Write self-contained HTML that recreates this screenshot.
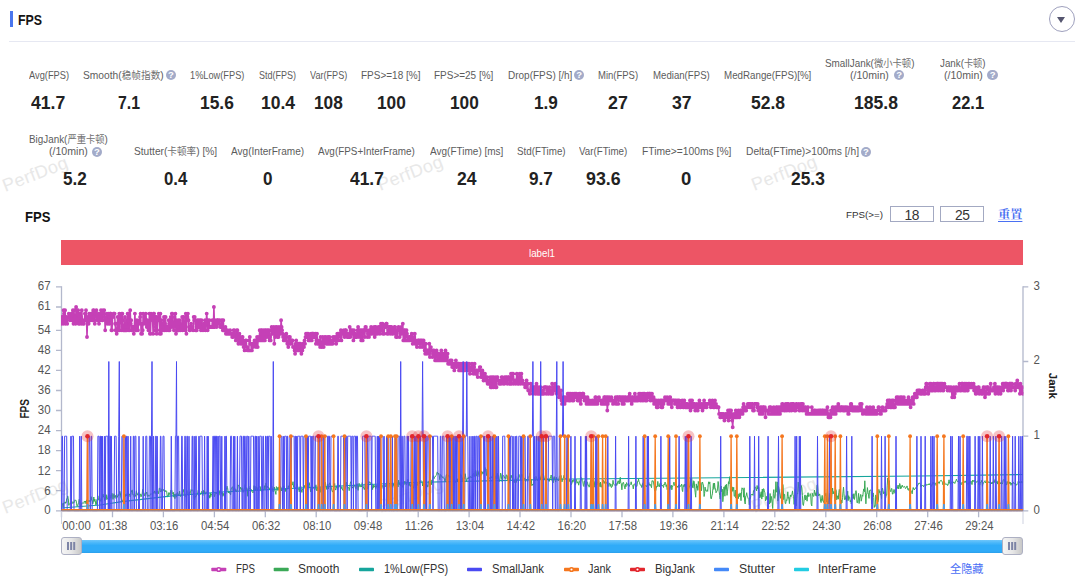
<!DOCTYPE html>
<html lang="zh-CN"><head><meta charset="utf-8"><title>FPS</title>
<style>
html,body{margin:0;padding:0;background:#fff}
body{width:1080px;height:579px;position:relative;overflow:hidden;font-family:"Liberation Sans","Noto Sans CJK SC",sans-serif;color:#222}
.hd{position:absolute;left:9px;top:0;width:1066px;height:41px;border-bottom:1px solid #e6e8f2}
.hd .bar{position:absolute;left:0.5px;top:11.2px;width:3px;height:15.8px;background:#4a76ee}
.tg{position:absolute;left:1048.5px;top:5.5px;width:24px;height:24px;border:1.2px solid #9ea0bd;border-radius:50%;background:#fff}
.tg:after{content:"";position:absolute;left:7.5px;top:10.5px;border:4.7px solid transparent;border-top:6px solid #55566f;border-bottom:0}
.t{position:absolute;display:inline-block;white-space:nowrap;transform-origin:0 50%;margin:0}
.lb{font-size:10.8px;line-height:14px;color:#5c5c5c}
.cj{font-size:10.2px;color:#707070}
.vl{font-size:18px;line-height:22px;font-weight:bold;color:#222}
.h2t{font-size:15.5px;line-height:18px;font-weight:bold;color:#111}
.h1t{font-size:15.2px;line-height:18px;font-weight:bold;color:#151515}
.fl{font-size:9.8px;line-height:12px;color:#333}
.bt{font-size:10.4px;line-height:12px;color:#fff}
.rs{font-family:"Liberation Serif","Noto Serif CJK SC",serif;font-weight:bold;font-size:12.2px;line-height:15px;color:#4a70f2;text-decoration:underline;text-decoration-thickness:1px;text-underline-offset:1.5px}
.lt{font-size:12px;line-height:15px;color:#333}
.ha{font-size:11.3px;line-height:15px;color:#4a6ef5}
.q{position:absolute;width:10.4px;height:10.4px;border-radius:50%;background:#a3abc9;color:#fff;font-size:9.5px;line-height:10.8px;font-style:normal;font-weight:bold;text-align:center}
.sl{position:absolute;left:80px;top:539.8px;width:925px;height:12.9px;background:linear-gradient(#6fc6fb 0,#4ab7f9 22%,#30abf8 42%,#30abf8 86%,#2b9fea 100%)}
.hn{position:absolute;top:537.2px;width:20.5px;height:18.2px;box-sizing:border-box;border:1.3px solid #adb0c3;border-radius:3px;background:linear-gradient(90deg,#f5f5f5,#e7e7e7 50%,#c8c8c8)}
.hn:after{content:"";position:absolute;left:5.2px;top:4.1px;width:1.3px;height:7.5px;background:#7d84a6;box-shadow:3.15px 0 0 #7d84a6,6.2px 0 0 #7d84a6}
.in{position:absolute;top:205.7px;width:41.8px;height:14.4px;border:1px solid #a3a9c2;font-size:13.8px;letter-spacing:-0.6px;line-height:18px;text-align:center;color:#333;background:#fff}
.band{position:absolute;left:61px;top:239.5px;width:962px;height:25.5px;background:#ed5565;color:#fff;font-size:9.5px;line-height:26px;text-align:center}
.chart{position:absolute;left:0;top:0}
.wm{position:absolute;font-size:18px;color:#e8e8e8;transform:rotate(-21deg);letter-spacing:0.4px}
</style></head><body>
<div class="wm" style="left:1px;top:164px">PerfDog</div>
<div class="wm" style="left:376px;top:163px">PerfDog</div>
<div class="wm" style="left:750px;top:163px">PerfDog</div>
<div class="wm" style="left:1px;top:486px">PerfDog</div>
<div class="wm" style="left:376px;top:485px">PerfDog</div>
<div class="wm" style="left:750px;top:485px">PerfDog</div>
<div class="hd"><span class="bar"></span></div>
<div class="band"></div>
<div class="tg"></div>
<section class="stats"><span id="a1" class="t lb" style="left:28.80px;top:68.13px;transform:scaleX(0.8603)">Avg(FPS)</span><span id="a1v" class="t vl" style="left:31.30px;top:92.25px;transform:scaleX(0.9787)">41.7</span><span id="a2" class="t lb" style="left:82.60px;top:68.13px;transform:scaleX(0.9475)">Smooth(<span class="cj">稳帧指数</span>)</span><span id="a2v" class="t vl" style="left:117.70px;top:92.25px;transform:scaleX(0.8789)">7.1</span><span id="a3" class="t lb" style="left:190.30px;top:68.13px;transform:scaleX(0.8552)">1%Low(FPS)</span><span id="a3v" class="t vl" style="left:200.40px;top:92.25px;transform:scaleX(0.9644)">15.6</span><span id="a4" class="t lb" style="left:258.80px;top:68.13px;transform:scaleX(0.8332)">Std(FPS)</span><span id="a4v" class="t vl" style="left:260.50px;top:92.25px;transform:scaleX(0.9730)">10.4</span><span id="a5" class="t lb" style="left:309.60px;top:68.13px;transform:scaleX(0.8438)">Var(FPS)</span><span id="a5v" class="t vl" style="left:314.40px;top:92.25px;transform:scaleX(0.9585)">108</span><span id="a6" class="t lb" style="left:360.90px;top:68.13px;transform:scaleX(0.9250)">FPS&gt;=18 [%]</span><span id="a6v" class="t vl" style="left:376.50px;top:92.25px;transform:scaleX(0.9585)">100</span><span id="a7" class="t lb" style="left:434.10px;top:68.13px;transform:scaleX(0.9234)">FPS&gt;=25 [%]</span><span id="a7v" class="t vl" style="left:449.60px;top:92.25px;transform:scaleX(0.9585)">100</span><span id="a8" class="t lb" style="left:507.50px;top:68.13px;transform:scaleX(0.9252)">Drop(FPS) [/h]</span><span id="a8v" class="t vl" style="left:534.30px;top:92.25px;transform:scaleX(0.9508)">1.9</span><span id="a9" class="t lb" style="left:598.40px;top:68.13px;transform:scaleX(0.8795)">Min(FPS)</span><span id="a9v" class="t vl" style="left:608.40px;top:92.25px;transform:scaleX(0.9885)">27</span><span id="a10" class="t lb" style="left:652.80px;top:68.13px;transform:scaleX(0.8930)">Median(FPS)</span><span id="a10v" class="t vl" style="left:671.50px;top:92.25px;transform:scaleX(0.9785)">37</span><span id="a11" class="t lb" style="left:723.60px;top:68.13px;transform:scaleX(0.9036)">MedRange(FPS)[%]</span><span id="a11v" class="t vl" style="left:750.50px;top:92.25px;transform:scaleX(0.9730)">52.8</span><span id="a12" class="t lb" style="left:824.60px;top:55.83px;transform:scaleX(0.9155)">SmallJank(<span class="cj">微小卡顿</span>)</span><span id="a12b" class="t lb" style="left:850.20px;top:68.13px;transform:scaleX(0.9796)">(/10min)</span><span id="a12v" class="t vl" style="left:853.90px;top:92.25px;transform:scaleX(0.9745)">185.8</span><span id="a13" class="t lb" style="left:939.80px;top:55.83px;transform:scaleX(0.9049)">Jank(<span class="cj">卡顿</span>)</span><span id="a13b" class="t lb" style="left:943.60px;top:68.13px;transform:scaleX(0.9796)">(/10min)</span><span id="a13v" class="t vl" style="left:952.10px;top:92.25px;transform:scaleX(0.9159)">22.1</span><span id="b1" class="t lb" style="left:28.80px;top:131.93px;transform:scaleX(0.9135)">BigJank(<span class="cj">严重卡顿</span>)</span><span id="b1b" class="t lb" style="left:48.80px;top:144.23px;transform:scaleX(0.9821)">(/10min)</span><span id="b1v" class="t vl" style="left:62.60px;top:168.25px;transform:scaleX(0.9508)">5.2</span><span id="b2" class="t lb" style="left:134.00px;top:144.23px;transform:scaleX(0.9425)">Stutter(<span class="cj">卡顿率</span>) [%]</span><span id="b2v" class="t vl" style="left:164.00px;top:168.25px;transform:scaleX(0.9308)">0.4</span><span id="b3" class="t lb" style="left:231.20px;top:144.23px;transform:scaleX(0.9323)">Avg(InterFrame)</span><span id="b3v" class="t vl" style="left:263.00px;top:168.25px;transform:scaleX(0.9485)">0</span><span id="b4" class="t lb" style="left:318.40px;top:144.23px;transform:scaleX(0.9167)">Avg(FPS+InterFrame)</span><span id="b4v" class="t vl" style="left:349.70px;top:168.25px;transform:scaleX(0.9644)">41.7</span><span id="b5" class="t lb" style="left:429.60px;top:144.23px;transform:scaleX(0.9269)">Avg(FTime) [ms]</span><span id="b5v" class="t vl" style="left:456.60px;top:168.25px;transform:scaleX(0.9735)">24</span><span id="b6" class="t lb" style="left:517.00px;top:144.23px;transform:scaleX(0.9068)">Std(FTime)</span><span id="b6v" class="t vl" style="left:529.30px;top:168.25px;transform:scaleX(0.9508)">9.7</span><span id="b7" class="t lb" style="left:579.40px;top:144.23px;transform:scaleX(0.9047)">Var(FTime)</span><span id="b7v" class="t vl" style="left:586.40px;top:168.25px;transform:scaleX(0.9872)">93.6</span><span id="b8" class="t lb" style="left:641.50px;top:144.23px;transform:scaleX(0.9530)">FTime&gt;=100ms [%]</span><span id="b8v" class="t vl" style="left:680.80px;top:168.25px;transform:scaleX(1.0284)">0</span><span id="b9" class="t lb" style="left:745.50px;top:144.23px;transform:scaleX(0.9471)">Delta(FTime)&gt;100ms [/h]</span><span id="b9v" class="t vl" style="left:791.30px;top:168.25px;transform:scaleX(0.9644)">25.3</span><h1 id="h1" class="t h1t" style="left:18.20px;top:11.18px;transform:scaleX(0.8157)">FPS</h1><h2 id="ct" class="t h2t" style="left:25.20px;top:208.08px;transform:scaleX(0.8423)">FPS</h2><label id="fl" class="t fl" style="left:846.30px;top:209.36px;transform:scaleX(1.0019)">FPS(&gt;=)</label><span id="band" class="t bt" style="left:528.60px;top:247.56px;transform:scaleX(0.9375)">label1</span><a id="rs" class="t rs" style="left:998.30px;top:207.97px;transform:scaleX(1.0010)">重置</a><a id="ha" class="t ha" style="left:950.00px;top:561.77px;transform:scaleX(0.9880)">全隐藏</a><span id="lg0" class="t lt" style="left:235.80px;top:561.83px;transform:scaleX(0.8096)">FPS</span><span id="lg1" class="t lt" style="left:298.30px;top:561.83px;transform:scaleX(1.0010)">Smooth</span><span id="lg2" class="t lt" style="left:384.00px;top:561.83px;transform:scaleX(0.9054)">1%Low(FPS)</span><span id="lg3" class="t lt" style="left:492.00px;top:561.83px;transform:scaleX(0.9393)">SmallJank</span><span id="lg4" class="t lt" style="left:588.00px;top:561.83px;transform:scaleX(0.9070)">Jank</span><span id="lg5" class="t lt" style="left:655.00px;top:561.83px;transform:scaleX(0.9367)">BigJank</span><span id="lg6" class="t lt" style="left:739.00px;top:561.83px;transform:scaleX(1.0181)">Stutter</span><span id="lg7" class="t lt" style="left:818.00px;top:561.83px;transform:scaleX(0.9883)">InterFrame</span><i class="q" style="left:165.6px;top:70.0px">?</i><i class="q" style="left:574.0px;top:70.0px">?</i><i class="q" style="left:894.0px;top:70.0px">?</i><i class="q" style="left:987.4px;top:70.0px">?</i><i class="q" style="left:91.8px;top:146.6px">?</i><i class="q" style="left:860.8px;top:146.6px">?</i></section>
<div class="in" style="left:889.8px">18</div>
<div class="in" style="left:940.3px">25</div>
<svg class="chart" width="1080" height="579" viewBox="0 0 1080 579">
<g font-family="Liberation Sans, sans-serif" font-size="12" fill="#555">
<text x="50.6" y="513.5" text-anchor="end" textLength="6.4" lengthAdjust="spacingAndGlyphs">0</text><text x="50.6" y="494.5" text-anchor="end" textLength="6.4" lengthAdjust="spacingAndGlyphs">6</text><text x="50.6" y="474.5" text-anchor="end" textLength="12.8" lengthAdjust="spacingAndGlyphs">12</text><text x="50.6" y="454.4" text-anchor="end" textLength="12.8" lengthAdjust="spacingAndGlyphs">18</text><text x="50.6" y="434.4" text-anchor="end" textLength="12.8" lengthAdjust="spacingAndGlyphs">24</text><text x="50.6" y="414.3" text-anchor="end" textLength="12.8" lengthAdjust="spacingAndGlyphs">30</text><text x="50.6" y="394.3" text-anchor="end" textLength="12.8" lengthAdjust="spacingAndGlyphs">36</text><text x="50.6" y="374.2" text-anchor="end" textLength="12.8" lengthAdjust="spacingAndGlyphs">42</text><text x="50.6" y="354.2" text-anchor="end" textLength="12.8" lengthAdjust="spacingAndGlyphs">48</text><text x="50.6" y="334.1" text-anchor="end" textLength="12.8" lengthAdjust="spacingAndGlyphs">54</text><text x="50.6" y="309.7" text-anchor="end" textLength="12.8" lengthAdjust="spacingAndGlyphs">61</text><text x="50.6" y="289.6" text-anchor="end" textLength="12.8" lengthAdjust="spacingAndGlyphs">67</text><text x="1033.5" y="513.5" textLength="6.4" lengthAdjust="spacingAndGlyphs">0</text><text x="1033.5" y="438.9" textLength="6.4" lengthAdjust="spacingAndGlyphs">1</text><text x="1033.5" y="364.2" textLength="6.4" lengthAdjust="spacingAndGlyphs">2</text><text x="1033.5" y="289.6" textLength="6.4" lengthAdjust="spacingAndGlyphs">3</text><text x="62.3" y="529.6" textLength="28.4" lengthAdjust="spacingAndGlyphs">00:00</text><text x="113.2" y="529.6" text-anchor="middle" textLength="28.4" lengthAdjust="spacingAndGlyphs">01:38</text><text x="164.2" y="529.6" text-anchor="middle" textLength="28.4" lengthAdjust="spacingAndGlyphs">03:16</text><text x="215.2" y="529.6" text-anchor="middle" textLength="28.4" lengthAdjust="spacingAndGlyphs">04:54</text><text x="266.1" y="529.6" text-anchor="middle" textLength="28.4" lengthAdjust="spacingAndGlyphs">06:32</text><text x="317.1" y="529.6" text-anchor="middle" textLength="28.4" lengthAdjust="spacingAndGlyphs">08:10</text><text x="368.0" y="529.6" text-anchor="middle" textLength="28.4" lengthAdjust="spacingAndGlyphs">09:48</text><text x="419.0" y="529.6" text-anchor="middle" textLength="28.4" lengthAdjust="spacingAndGlyphs">11:26</text><text x="469.9" y="529.6" text-anchor="middle" textLength="28.4" lengthAdjust="spacingAndGlyphs">13:04</text><text x="520.8" y="529.6" text-anchor="middle" textLength="28.4" lengthAdjust="spacingAndGlyphs">14:42</text><text x="571.8" y="529.6" text-anchor="middle" textLength="28.4" lengthAdjust="spacingAndGlyphs">16:20</text><text x="622.8" y="529.6" text-anchor="middle" textLength="28.4" lengthAdjust="spacingAndGlyphs">17:58</text><text x="673.7" y="529.6" text-anchor="middle" textLength="28.4" lengthAdjust="spacingAndGlyphs">19:36</text><text x="724.6" y="529.6" text-anchor="middle" textLength="28.4" lengthAdjust="spacingAndGlyphs">21:14</text><text x="775.6" y="529.6" text-anchor="middle" textLength="28.4" lengthAdjust="spacingAndGlyphs">22:52</text><text x="826.5" y="529.6" text-anchor="middle" textLength="28.4" lengthAdjust="spacingAndGlyphs">24:30</text><text x="877.5" y="529.6" text-anchor="middle" textLength="28.4" lengthAdjust="spacingAndGlyphs">26:08</text><text x="928.5" y="529.6" text-anchor="middle" textLength="28.4" lengthAdjust="spacingAndGlyphs">27:46</text><text x="979.4" y="529.6" text-anchor="middle" textLength="28.4" lengthAdjust="spacingAndGlyphs">29:24</text>
<text transform="translate(28.6 418.6) rotate(-90)" font-weight="bold" font-size="13.2" fill="#222" textLength="19.6" lengthAdjust="spacingAndGlyphs">FPS</text>
<text transform="translate(1049.4 385.9) rotate(90)" text-anchor="middle" font-weight="bold" font-size="11.5" fill="#222">Jank</text>
</g>
<path d="M61.5 286.3V511.4M1023 286.3V511.4M61 510.8H1023.6" stroke="#b3b8cc" stroke-width="1.3" fill="none"/><path d="M56 510.8H61.5M56 490.7H61.5M56 470.7H61.5M56 450.6H61.5M56 430.6H61.5M56 410.5H61.5M56 390.5H61.5M56 370.4H61.5M56 350.4H61.5M56 330.3H61.5M56 307.0H61.5M56 286.9H61.5M1023 510.8h5.3M1023 436.2h5.3M1023 361.5h5.3M1023 286.9h5.3M61.5 511.3v6M112.5 511.3v6M163.4 511.3v6M214.4 511.3v6M265.3 511.3v6M316.2 511.3v6M367.2 511.3v6M418.2 511.3v6M469.1 511.3v6M520.0 511.3v6M571.0 511.3v6M622.0 511.3v6M672.9 511.3v6M723.9 511.3v6M774.8 511.3v6M825.8 511.3v6M876.7 511.3v6M927.7 511.3v6M978.6 511.3v6" stroke="#b3b8cc" stroke-width="1.3" fill="none"/><path d="M61.5 511V524M1023 511V524" stroke="#cdd1e0" stroke-width="1" fill="none"/>
<clipPath id="cp"><rect x="61" y="280" width="962.4" height="231.2"/></clipPath>
<g fill="none" stroke-linejoin="round" clip-path="url(#cp)">
<path d="M61.5 323.7 62.0 317.0 62.5 317.0 63.1 323.7 63.6 310.3 64.1 313.6 64.6 320.3 65.1 310.3 65.7 323.7 66.2 320.3 66.7 317.0 67.2 323.7 67.7 317.0 68.3 317.0 68.8 313.6 69.3 317.0 69.8 320.3 70.3 317.0 70.9 317.0 71.4 313.6 71.9 320.3 72.4 313.6 72.9 310.3 73.5 323.7 74.0 310.3 74.5 320.3 75.0 317.0 75.5 323.7 76.1 307.0 76.6 320.3 77.1 310.3 77.6 320.3 78.1 310.3 78.7 323.7 79.2 317.0 79.7 323.7 80.2 313.6 80.8 317.0 81.3 323.7 81.8 310.3 82.3 320.3 82.8 323.7 83.4 323.7 83.9 323.7 84.4 320.3 84.9 313.6 85.4 320.3 86.0 310.3 86.5 317.0 87.0 337.0 87.5 320.3 88.0 317.0 88.6 323.7 89.1 313.6 89.6 320.3 90.1 317.0 90.6 320.3 91.2 313.6 91.7 313.6 92.2 320.3 92.7 320.3 93.2 310.3 93.8 310.3 94.3 320.3 94.8 323.7 95.3 313.6 95.8 313.6 96.4 310.3 96.9 317.0 97.4 320.3 97.9 317.0 98.4 313.6 99.0 323.7 99.5 320.3 100.0 313.6 100.5 317.0 101.0 310.3 101.6 313.6 102.1 320.3 102.6 320.3 103.1 310.3 103.6 313.6 104.2 310.3 104.7 317.0 105.2 330.3 105.7 317.0 106.2 320.3 106.8 313.6 107.3 323.7 107.8 320.3 108.3 313.6 108.8 323.7 109.4 323.7 109.9 313.6 110.4 313.6 110.9 313.6 111.4 330.3 112.0 330.3 112.5 317.0 113.0 317.0 113.5 313.6 114.0 313.6 114.6 313.6 115.1 323.7 115.6 330.3 116.1 330.3 116.7 333.7 117.2 323.7 117.7 317.0 118.2 330.3 118.7 327.0 119.3 313.6 119.8 330.3 120.3 317.0 120.8 317.0 121.3 313.6 121.9 330.3 122.4 313.6 122.9 320.3 123.4 330.3 123.9 330.3 124.5 330.3 125.0 317.0 125.5 330.3 126.0 323.7 126.5 330.3 127.1 320.3 127.6 313.6 128.1 330.3 128.6 313.6 129.1 313.6 129.7 330.3 130.2 310.3 130.7 323.7 131.2 320.3 131.7 330.3 132.3 327.0 132.8 327.0 133.3 327.0 133.8 333.7 134.3 327.0 134.9 313.6 135.4 327.0 135.9 330.3 136.4 330.3 136.9 320.3 137.5 323.7 138.0 330.3 138.5 323.7 139.0 323.7 139.5 320.3 140.1 317.0 140.6 313.6 141.1 333.7 141.6 323.7 142.1 333.7 142.7 330.3 143.2 313.6 143.7 323.7 144.2 317.0 144.7 317.0 145.3 323.7 145.8 313.6 146.3 320.3 146.8 327.0 147.3 320.3 147.9 323.7 148.4 330.3 148.9 327.0 149.4 313.6 149.9 333.7 150.5 333.7 151.0 313.6 151.5 317.0 152.0 317.0 152.6 320.3 153.1 333.7 153.6 313.6 154.1 313.6 154.6 317.0 155.2 330.3 155.7 327.0 156.2 317.0 156.7 333.7 157.2 330.3 157.8 317.0 158.3 320.3 158.8 313.6 159.3 317.0 159.8 333.7 160.4 313.6 160.9 333.7 161.4 320.3 161.9 323.7 162.4 330.3 163.0 330.3 163.5 323.7 164.0 317.0 164.5 330.3 165.0 323.7 165.6 317.0 166.1 330.3 166.6 327.0 167.1 327.0 167.6 327.0 168.2 330.3 168.7 320.3 169.2 323.7 169.7 330.3 170.2 320.3 170.8 317.0 171.3 327.0 171.8 313.6 172.3 313.6 172.8 323.7 173.4 327.0 173.9 330.3 174.4 317.0 174.9 323.7 175.4 313.6 176.0 333.7 176.5 320.3 177.0 323.7 177.5 330.3 178.0 330.3 178.6 320.3 179.1 330.3 179.6 320.3 180.1 323.7 180.6 330.3 181.2 327.0 181.7 327.0 182.2 317.0 182.7 330.3 183.2 317.0 183.8 317.0 184.3 323.7 184.8 327.0 185.3 330.3 185.8 313.6 186.4 333.7 186.9 317.0 187.4 317.0 187.9 313.6 188.5 320.3 189.0 327.0 189.5 330.3 190.0 330.3 190.5 327.0 191.1 323.7 191.6 327.0 192.1 327.0 192.6 327.0 193.1 330.3 193.7 317.0 194.2 320.3 194.7 317.0 195.2 320.3 195.7 330.3 196.3 323.7 196.8 330.3 197.3 320.3 197.8 327.0 198.3 327.0 198.9 320.3 199.4 327.0 199.9 320.3 200.4 320.3 200.9 330.3 201.5 320.3 202.0 327.0 202.5 327.0 203.0 330.3 203.5 323.7 204.1 323.7 204.6 327.0 205.1 320.3 205.6 330.3 206.1 323.7 206.7 313.6 207.2 320.3 207.7 330.3 208.2 320.3 208.7 327.0 209.3 320.3 209.8 327.0 210.3 327.0 210.8 327.0 211.3 327.0 211.9 327.0 212.4 320.3 212.9 327.0 213.4 327.0 213.9 307.0 214.5 327.0 215.0 327.0 215.5 323.7 216.0 320.3 216.5 327.0 217.1 320.3 217.6 320.3 218.1 320.3 218.6 323.7 219.1 323.7 219.7 320.3 220.2 327.0 220.7 327.0 221.2 327.0 221.8 320.3 222.3 320.3 222.8 330.3 223.3 320.3 223.8 330.3 224.4 330.3 224.9 330.3 225.4 327.0 225.9 333.7 226.4 333.7 227.0 333.7 227.5 330.3 228.0 333.7 228.5 333.7 229.0 333.7 229.6 333.7 230.1 330.3 230.6 333.7 231.1 333.7 231.6 333.7 232.2 337.0 232.7 333.7 233.2 337.0 233.7 330.3 234.2 330.3 234.8 333.7 235.3 337.0 235.8 340.4 236.3 340.4 236.8 330.3 237.4 330.3 237.9 337.0 238.4 343.7 238.9 337.0 239.4 333.7 240.0 337.0 240.5 340.4 241.0 343.7 241.5 343.7 242.0 337.0 242.6 337.0 243.1 340.4 243.6 347.1 244.1 343.7 244.6 350.4 245.2 343.7 245.7 340.4 246.2 340.4 246.7 347.1 247.2 347.1 247.8 350.4 248.3 350.4 248.8 350.4 249.3 340.4 249.8 337.0 250.4 343.7 250.9 343.7 251.4 350.4 251.9 350.4 252.4 343.7 253.0 347.1 253.5 343.7 254.0 343.7 254.5 340.4 255.0 343.7 255.6 340.4 256.1 347.1 256.6 340.4 257.1 337.0 257.7 347.1 258.2 337.0 258.7 340.4 259.2 340.4 259.7 330.3 260.3 340.4 260.8 337.0 261.3 330.3 261.8 330.3 262.3 340.4 262.9 330.3 263.4 337.0 263.9 330.3 264.4 340.4 264.9 340.4 265.5 330.3 266.0 330.3 266.5 337.0 267.0 330.3 267.5 330.3 268.1 337.0 268.6 330.3 269.1 330.3 269.6 340.4 270.1 337.0 270.7 340.4 271.2 330.3 271.7 327.0 272.2 333.7 272.7 333.7 273.3 330.3 273.8 327.0 274.3 343.7 274.8 330.3 275.3 337.0 275.9 327.0 276.4 333.7 276.9 327.0 277.4 337.0 277.9 330.3 278.5 337.0 279.0 327.0 279.5 330.3 280.0 333.7 280.5 333.7 281.1 320.3 281.6 327.0 282.1 330.3 282.6 333.7 283.1 337.0 283.7 340.4 284.2 337.0 284.7 337.0 285.2 337.0 285.7 340.4 286.3 333.7 286.8 337.0 287.3 343.7 287.8 343.7 288.3 347.1 288.9 337.0 289.4 337.0 289.9 337.0 290.4 343.7 290.9 343.7 291.5 340.4 292.0 340.4 292.5 340.4 293.0 347.1 293.6 347.1 294.1 347.1 294.6 350.4 295.1 353.7 295.6 343.7 296.2 340.4 296.7 350.4 297.2 343.7 297.7 350.4 298.2 350.4 298.8 343.7 299.3 343.7 299.8 350.4 300.3 343.7 300.8 350.4 301.4 353.7 301.9 347.1 302.4 350.4 302.9 343.7 303.4 347.1 304.0 347.1 304.5 340.4 305.0 343.7 305.5 337.0 306.0 333.7 306.6 337.0 307.1 333.7 307.6 337.0 308.1 333.7 308.6 340.4 309.2 340.4 309.7 340.4 310.2 337.0 310.7 337.0 311.2 333.7 311.8 340.4 312.3 333.7 312.8 333.7 313.3 337.0 313.8 333.7 314.4 337.0 314.9 337.0 315.4 333.7 315.9 343.7 316.4 340.4 317.0 333.7 317.5 343.7 318.0 343.7 318.5 340.4 319.0 343.7 319.6 343.7 320.1 347.1 320.6 337.0 321.1 343.7 321.6 347.1 322.2 347.1 322.7 337.0 323.2 343.7 323.7 347.1 324.2 340.4 324.8 337.0 325.3 340.4 325.8 337.0 326.3 343.7 326.8 340.4 327.4 343.7 327.9 337.0 328.4 343.7 328.9 343.7 329.5 337.0 330.0 343.7 330.5 343.7 331.0 340.4 331.5 343.7 332.1 343.7 332.6 343.7 333.1 337.0 333.6 340.4 334.1 337.0 334.7 340.4 335.2 337.0 335.7 340.4 336.2 343.7 336.7 337.0 337.3 333.7 337.8 340.4 338.3 340.4 338.8 333.7 339.3 333.7 339.9 333.7 340.4 337.0 340.9 330.3 341.4 340.4 341.9 333.7 342.5 333.7 343.0 333.7 343.5 333.7 344.0 330.3 344.5 337.0 345.1 330.3 345.6 330.3 346.1 330.3 346.6 333.7 347.1 337.0 347.7 333.7 348.2 337.0 348.7 337.0 349.2 337.0 349.7 327.0 350.3 337.0 350.8 330.3 351.3 330.3 351.8 333.7 352.3 333.7 352.9 330.3 353.4 340.4 353.9 330.3 354.4 337.0 354.9 337.0 355.5 333.7 356.0 337.0 356.5 337.0 357.0 337.0 357.5 330.3 358.1 327.0 358.6 333.7 359.1 337.0 359.6 330.3 360.1 330.3 360.7 337.0 361.2 340.4 361.7 330.3 362.2 333.7 362.7 340.4 363.3 330.3 363.8 330.3 364.3 330.3 364.8 337.0 365.4 327.0 365.9 327.0 366.4 330.3 366.9 330.3 367.4 337.0 368.0 333.7 368.5 333.7 369.0 337.0 369.5 330.3 370.0 333.7 370.6 333.7 371.1 327.0 371.6 333.7 372.1 333.7 372.6 330.3 373.2 330.3 373.7 333.7 374.2 327.0 374.7 337.0 375.2 327.0 375.8 327.0 376.3 333.7 376.8 330.3 377.3 333.7 377.8 330.3 378.4 327.0 378.9 330.3 379.4 327.0 379.9 333.7 380.4 330.3 381.0 323.7 381.5 327.0 382.0 330.3 382.5 323.7 383.0 333.7 383.6 333.7 384.1 333.7 384.6 327.0 385.1 327.0 385.6 327.0 386.2 323.7 386.7 323.7 387.2 333.7 387.7 333.7 388.2 333.7 388.8 327.0 389.3 327.0 389.8 330.3 390.3 333.7 390.8 327.0 391.4 327.0 391.9 333.7 392.4 330.3 392.9 333.7 393.4 330.3 394.0 330.3 394.5 327.0 395.0 327.0 395.5 333.7 396.0 337.0 396.6 330.3 397.1 337.0 397.6 330.3 398.1 330.3 398.6 327.0 399.2 330.3 399.7 337.0 400.2 333.7 400.7 330.3 401.3 327.0 401.8 333.7 402.3 330.3 402.8 323.7 403.3 340.4 403.9 340.4 404.4 330.3 404.9 330.3 405.4 340.4 405.9 333.7 406.5 330.3 407.0 333.7 407.5 337.0 408.0 340.4 408.5 337.0 409.1 337.0 409.6 340.4 410.1 340.4 410.6 337.0 411.1 337.0 411.7 333.7 412.2 337.0 412.7 343.7 413.2 340.4 413.7 340.4 414.3 337.0 414.8 333.7 415.3 343.7 415.8 340.4 416.3 343.7 416.9 347.1 417.4 343.7 417.9 340.4 418.4 340.4 418.9 340.4 419.5 340.4 420.0 347.1 420.5 340.4 421.0 340.4 421.5 340.4 422.1 347.1 422.6 340.4 423.1 343.7 423.6 340.4 424.1 347.1 424.7 350.4 425.2 353.7 425.7 343.7 426.2 350.4 426.7 353.7 427.3 350.4 427.8 350.4 428.3 350.4 428.8 353.7 429.3 343.7 429.9 357.1 430.4 350.4 430.9 347.1 431.4 350.4 431.9 350.4 432.5 357.1 433.0 353.7 433.5 350.4 434.0 350.4 434.5 357.1 435.1 360.4 435.6 353.7 436.1 353.7 436.6 350.4 437.2 360.4 437.7 357.1 438.2 357.1 438.7 353.7 439.2 357.1 439.8 360.4 440.3 360.4 440.8 353.7 441.3 350.4 441.8 360.4 442.4 353.7 442.9 360.4 443.4 360.4 443.9 353.7 444.4 360.4 445.0 353.7 445.5 350.4 446.0 360.4 446.5 360.4 447.0 357.1 447.6 353.7 448.1 363.8 448.6 363.8 449.1 363.8 449.6 363.8 450.2 360.4 450.7 363.8 451.2 363.8 451.7 360.4 452.2 367.1 452.8 363.8 453.3 367.1 453.8 367.1 454.3 370.4 454.8 363.8 455.4 363.8 455.9 360.4 456.4 367.1 456.9 367.1 457.4 363.8 458.0 363.8 458.5 363.8 459.0 370.4 459.5 370.4 460.0 363.8 460.6 370.4 461.1 367.1 461.6 367.1 462.1 363.8 462.6 370.4 463.2 363.8 463.7 367.1 464.2 363.8 464.7 370.4 465.2 363.8 465.8 367.1 466.3 363.8 466.8 363.8 467.3 367.1 467.8 367.1 468.4 370.4 468.9 363.8 469.4 367.1 469.9 373.8 470.4 370.4 471.0 367.1 471.5 370.4 472.0 363.8 472.5 370.4 473.1 367.1 473.6 373.8 474.1 367.1 474.6 363.8 475.1 373.8 475.7 373.8 476.2 373.8 476.7 370.4 477.2 370.4 477.7 377.1 478.3 370.4 478.8 370.4 479.3 370.4 479.8 367.1 480.3 367.1 480.9 377.1 481.4 373.8 481.9 377.1 482.4 370.4 482.9 373.8 483.5 380.5 484.0 377.1 484.5 373.8 485.0 373.8 485.5 380.5 486.1 380.5 486.6 377.1 487.1 377.1 487.6 383.8 488.1 380.5 488.7 383.8 489.2 380.5 489.7 383.8 490.2 377.1 490.7 387.2 491.3 377.1 491.8 387.2 492.3 377.1 492.8 380.5 493.3 387.2 493.9 377.1 494.4 383.8 494.9 380.5 495.4 387.2 495.9 377.1 496.5 387.2 497.0 377.1 497.5 377.1 498.0 380.5 498.5 380.5 499.1 383.8 499.6 383.8 500.1 383.8 500.6 380.5 501.1 383.8 501.7 377.1 502.2 377.1 502.7 380.5 503.2 380.5 503.7 383.8 504.3 383.8 504.8 377.1 505.3 377.1 505.8 380.5 506.3 377.1 506.9 377.1 507.4 383.8 507.9 377.1 508.4 377.1 509.0 377.1 509.5 383.8 510.0 380.5 510.5 383.8 511.0 373.8 511.6 383.8 512.1 373.8 512.6 377.1 513.1 373.8 513.6 383.8 514.2 380.5 514.7 380.5 515.2 380.5 515.7 383.8 516.2 380.5 516.8 373.8 517.3 380.5 517.8 383.8 518.3 377.1 518.8 383.8 519.4 380.5 519.9 373.8 520.4 383.8 520.9 377.1 521.4 373.8 522.0 380.5 522.5 380.5 523.0 383.8 523.5 383.8 524.0 383.8 524.6 383.8 525.1 387.2 525.6 383.8 526.1 387.2 526.6 380.5 527.2 383.8 527.7 383.8 528.2 390.5 528.7 390.5 529.2 390.5 529.8 393.8 530.3 390.5 530.8 383.8 531.3 387.2 531.8 387.2 532.4 387.2 532.9 393.8 533.4 390.5 533.9 387.2 534.4 387.2 535.0 387.2 535.5 393.8 536.0 393.8 536.5 383.8 537.0 387.2 537.6 393.8 538.1 387.2 538.6 393.8 539.1 387.2 539.6 393.8 540.2 393.8 540.7 387.2 541.2 393.8 541.7 393.8 542.2 393.8 542.8 390.5 543.3 393.8 543.8 393.8 544.3 387.2 544.9 387.2 545.4 387.2 545.9 387.2 546.4 393.8 546.9 387.2 547.5 390.5 548.0 393.8 548.5 393.8 549.0 390.5 549.5 387.2 550.1 390.5 550.6 393.8 551.1 393.8 551.6 393.8 552.1 383.8 552.7 393.8 553.2 387.2 553.7 387.2 554.2 387.2 554.7 390.5 555.3 383.8 555.8 387.2 556.3 387.2 556.8 393.8 557.3 387.2 557.9 390.5 558.4 387.2 558.9 397.2 559.4 393.8 559.9 397.2 560.5 390.5 561.0 390.5 561.5 400.5 562.0 403.9 562.5 400.5 563.1 400.5 563.6 397.2 564.1 397.2 564.6 403.9 565.1 397.2 565.7 400.5 566.2 400.5 566.7 400.5 567.2 397.2 567.7 393.8 568.3 393.8 568.8 400.5 569.3 400.5 569.8 393.8 570.3 400.5 570.9 393.8 571.4 397.2 571.9 397.2 572.4 400.5 572.9 393.8 573.5 400.5 574.0 397.2 574.5 393.8 575.0 397.2 575.5 393.8 576.1 397.2 576.6 393.8 577.1 397.2 577.6 400.5 578.2 397.2 578.7 400.5 579.2 393.8 579.7 400.5 580.2 393.8 580.8 403.9 581.3 397.2 581.8 397.2 582.3 393.8 582.8 393.8 583.4 393.8 583.9 397.2 584.4 400.5 584.9 400.5 585.4 397.2 586.0 400.5 586.5 403.9 587.0 400.5 587.5 397.2 588.0 403.9 588.6 400.5 589.1 400.5 589.6 400.5 590.1 403.9 590.6 403.9 591.2 403.9 591.7 403.9 592.2 400.5 592.7 403.9 593.2 403.9 593.8 400.5 594.3 403.9 594.8 400.5 595.3 397.2 595.8 397.2 596.4 403.9 596.9 400.5 597.4 403.9 597.9 400.5 598.4 400.5 599.0 397.2 599.5 400.5 600.0 400.5 600.5 400.5 601.0 400.5 601.6 403.9 602.1 400.5 602.6 400.5 603.1 400.5 603.6 403.9 604.2 397.2 604.7 397.2 605.2 397.2 605.7 403.9 606.2 400.5 606.8 397.2 607.3 410.5 607.8 403.9 608.3 397.2 608.8 400.5 609.4 397.2 609.9 400.5 610.4 400.5 610.9 400.5 611.4 397.2 612.0 400.5 612.5 400.5 613.0 403.9 613.5 400.5 614.1 400.5 614.6 400.5 615.1 400.5 615.6 397.2 616.1 403.9 616.7 397.2 617.2 397.2 617.7 397.2 618.2 403.9 618.7 397.2 619.3 397.2 619.8 397.2 620.3 397.2 620.8 400.5 621.3 400.5 621.9 397.2 622.4 403.9 622.9 400.5 623.4 397.2 623.9 403.9 624.5 400.5 625.0 397.2 625.5 397.2 626.0 400.5 626.5 400.5 627.1 400.5 627.6 397.2 628.1 400.5 628.6 400.5 629.1 397.2 629.7 393.8 630.2 400.5 630.7 397.2 631.2 400.5 631.7 403.9 632.3 397.2 632.8 397.2 633.3 400.5 633.8 400.5 634.3 400.5 634.9 393.8 635.4 400.5 635.9 400.5 636.4 400.5 636.9 397.2 637.5 400.5 638.0 400.5 638.5 397.2 639.0 393.8 639.5 397.2 640.1 393.8 640.6 400.5 641.1 400.5 641.6 397.2 642.1 393.8 642.7 400.5 643.2 400.5 643.7 393.8 644.2 397.2 644.7 393.8 645.3 400.5 645.8 397.2 646.3 400.5 646.8 400.5 647.3 393.8 647.9 393.8 648.4 397.2 648.9 393.8 649.4 393.8 650.0 393.8 650.5 400.5 651.0 393.8 651.5 397.2 652.0 393.8 652.6 400.5 653.1 397.2 653.6 397.2 654.1 403.9 654.6 403.9 655.2 400.5 655.7 400.5 656.2 400.5 656.7 407.2 657.2 403.9 657.8 407.2 658.3 400.5 658.8 403.9 659.3 403.9 659.8 403.9 660.4 400.5 660.9 403.9 661.4 407.2 661.9 400.5 662.4 407.2 663.0 400.5 663.5 403.9 664.0 400.5 664.5 400.5 665.0 397.2 665.6 400.5 666.1 400.5 666.6 400.5 667.1 397.2 667.6 400.5 668.2 403.9 668.7 400.5 669.2 403.9 669.7 397.2 670.2 397.2 670.8 403.9 671.3 400.5 671.8 407.2 672.3 400.5 672.8 400.5 673.4 400.5 673.9 400.5 674.4 400.5 674.9 403.9 675.4 400.5 676.0 400.5 676.5 403.9 677.0 400.5 677.5 407.2 678.0 407.2 678.6 400.5 679.1 400.5 679.6 403.9 680.1 407.2 680.6 407.2 681.2 403.9 681.7 403.9 682.2 400.5 682.7 403.9 683.2 407.2 683.8 407.2 684.3 400.5 684.8 403.9 685.3 407.2 685.9 403.9 686.4 407.2 686.9 407.2 687.4 403.9 687.9 407.2 688.5 407.2 689.0 407.2 689.5 403.9 690.0 400.5 690.5 410.5 691.1 400.5 691.6 407.2 692.1 400.5 692.6 407.2 693.1 403.9 693.7 403.9 694.2 403.9 694.7 403.9 695.2 410.5 695.7 407.2 696.3 407.2 696.8 403.9 697.3 407.2 697.8 410.5 698.3 407.2 698.9 403.9 699.4 400.5 699.9 403.9 700.4 403.9 700.9 407.2 701.5 403.9 702.0 407.2 702.5 410.5 703.0 403.9 703.5 403.9 704.1 400.5 704.6 407.2 705.1 403.9 705.6 403.9 706.1 407.2 706.7 407.2 707.2 403.9 707.7 403.9 708.2 403.9 708.7 403.9 709.3 403.9 709.8 400.5 710.3 403.9 710.8 407.2 711.3 403.9 711.9 403.9 712.4 400.5 712.9 403.9 713.4 407.2 713.9 403.9 714.5 407.2 715.0 400.5 715.5 403.9 716.0 403.9 716.5 407.2 717.1 407.2 717.6 407.2 718.1 407.2 718.6 407.2 719.1 413.9 719.7 413.9 720.2 417.2 720.7 417.2 721.2 413.9 721.8 413.9 722.3 417.2 722.8 413.9 723.3 413.9 723.8 417.2 724.4 420.6 724.9 417.2 725.4 413.9 725.9 417.2 726.4 413.9 727.0 417.2 727.5 413.9 728.0 410.5 728.5 420.6 729.0 410.5 729.6 410.5 730.1 417.2 730.6 413.9 731.1 410.5 731.6 413.9 732.2 420.6 732.7 427.3 733.2 417.2 733.7 417.2 734.2 413.9 734.8 417.2 735.3 417.2 735.8 410.5 736.3 417.2 736.8 413.9 737.4 417.2 737.9 413.9 738.4 410.5 738.9 417.2 739.4 417.2 740.0 413.9 740.5 410.5 741.0 410.5 741.5 413.9 742.0 413.9 742.6 413.9 743.1 407.2 743.6 403.9 744.1 410.5 744.6 407.2 745.2 410.5 745.7 407.2 746.2 410.5 746.7 407.2 747.2 407.2 747.8 403.9 748.3 403.9 748.8 403.9 749.3 403.9 749.8 407.2 750.4 407.2 750.9 403.9 751.4 407.2 751.9 403.9 752.4 403.9 753.0 410.5 753.5 410.5 754.0 410.5 754.5 403.9 755.0 403.9 755.6 403.9 756.1 403.9 756.6 403.9 757.1 407.2 757.7 403.9 758.2 410.5 758.7 407.2 759.2 407.2 759.7 413.9 760.3 407.2 760.8 413.9 761.3 413.9 761.8 407.2 762.3 413.9 762.9 413.9 763.4 407.2 763.9 407.2 764.4 410.5 764.9 407.2 765.5 417.2 766.0 410.5 766.5 410.5 767.0 410.5 767.5 410.5 768.1 410.5 768.6 413.9 769.1 410.5 769.6 407.2 770.1 407.2 770.7 407.2 771.2 413.9 771.7 413.9 772.2 410.5 772.7 410.5 773.3 410.5 773.8 407.2 774.3 413.9 774.8 413.9 775.3 410.5 775.9 410.5 776.4 407.2 776.9 407.2 777.4 413.9 777.9 407.2 778.5 413.9 779.0 413.9 779.5 407.2 780.0 413.9 780.5 407.2 781.1 407.2 781.6 410.5 782.1 403.9 782.6 403.9 783.1 407.2 783.7 407.2 784.2 410.5 784.7 407.2 785.2 410.5 785.7 403.9 786.3 407.2 786.8 410.5 787.3 403.9 787.8 403.9 788.3 403.9 788.9 407.2 789.4 410.5 789.9 410.5 790.4 407.2 790.9 403.9 791.5 410.5 792.0 407.2 792.5 403.9 793.0 403.9 793.6 403.9 794.1 407.2 794.6 410.5 795.1 407.2 795.6 410.5 796.2 403.9 796.7 403.9 797.2 407.2 797.7 407.2 798.2 407.2 798.8 403.9 799.3 410.5 799.8 410.5 800.3 407.2 800.8 403.9 801.4 403.9 801.9 407.2 802.4 410.5 802.9 403.9 803.4 407.2 804.0 410.5 804.5 410.5 805.0 407.2 805.5 407.2 806.0 410.5 806.6 413.9 807.1 413.9 807.6 407.2 808.1 407.2 808.6 413.9 809.2 413.9 809.7 413.9 810.2 413.9 810.7 413.9 811.2 413.9 811.8 407.2 812.3 413.9 812.8 410.5 813.3 410.5 813.8 413.9 814.4 410.5 814.9 410.5 815.4 413.9 815.9 410.5 816.4 413.9 817.0 413.9 817.5 413.9 818.0 410.5 818.5 413.9 819.0 413.9 819.6 410.5 820.1 410.5 820.6 410.5 821.1 413.9 821.6 413.9 822.2 410.5 822.7 410.5 823.2 410.5 823.7 413.9 824.2 410.5 824.8 413.9 825.3 410.5 825.8 413.9 826.3 410.5 826.8 410.5 827.4 407.2 827.9 413.9 828.4 417.2 828.9 413.9 829.5 417.2 830.0 413.9 830.5 417.2 831.0 410.5 831.5 413.9 832.1 413.9 832.6 407.2 833.1 407.2 833.6 410.5 834.1 413.9 834.7 410.5 835.2 407.2 835.7 413.9 836.2 410.5 836.7 407.2 837.3 407.2 837.8 410.5 838.3 403.9 838.8 407.2 839.3 407.2 839.9 410.5 840.4 410.5 840.9 407.2 841.4 407.2 841.9 407.2 842.5 407.2 843.0 410.5 843.5 407.2 844.0 410.5 844.5 407.2 845.1 410.5 845.6 407.2 846.1 407.2 846.6 410.5 847.1 407.2 847.7 410.5 848.2 413.9 848.7 413.9 849.2 410.5 849.7 407.2 850.3 407.2 850.8 403.9 851.3 403.9 851.8 407.2 852.3 410.5 852.9 407.2 853.4 410.5 853.9 410.5 854.4 407.2 854.9 410.5 855.5 407.2 856.0 410.5 856.5 410.5 857.0 410.5 857.5 407.2 858.1 410.5 858.6 407.2 859.1 410.5 859.6 407.2 860.1 403.9 860.7 407.2 861.2 410.5 861.7 403.9 862.2 410.5 862.8 413.9 863.3 410.5 863.8 410.5 864.3 410.5 864.8 410.5 865.4 410.5 865.9 413.9 866.4 410.5 866.9 407.2 867.4 410.5 868.0 413.9 868.5 413.9 869.0 410.5 869.5 410.5 870.0 407.2 870.6 413.9 871.1 413.9 871.6 413.9 872.1 410.5 872.6 410.5 873.2 407.2 873.7 410.5 874.2 413.9 874.7 410.5 875.2 413.9 875.8 413.9 876.3 413.9 876.8 413.9 877.3 410.5 877.8 410.5 878.4 407.2 878.9 407.2 879.4 410.5 879.9 410.5 880.4 413.9 881.0 413.9 881.5 410.5 882.0 410.5 882.5 407.2 883.0 410.5 883.6 410.5 884.1 410.5 884.6 410.5 885.1 410.5 885.6 410.5 886.2 407.2 886.7 407.2 887.2 403.9 887.7 400.5 888.2 407.2 888.8 403.9 889.3 400.5 889.8 400.5 890.3 407.2 890.8 403.9 891.4 407.2 891.9 400.5 892.4 403.9 892.9 407.2 893.4 400.5 894.0 407.2 894.5 407.2 895.0 407.2 895.5 400.5 896.0 400.5 896.6 397.2 897.1 400.5 897.6 403.9 898.1 397.2 898.7 403.9 899.2 400.5 899.7 403.9 900.2 397.2 900.7 403.9 901.3 400.5 901.8 397.2 902.3 400.5 902.8 403.9 903.3 403.9 903.9 397.2 904.4 400.5 904.9 400.5 905.4 403.9 905.9 403.9 906.5 403.9 907.0 400.5 907.5 403.9 908.0 400.5 908.5 397.2 909.1 403.9 909.6 400.5 910.1 403.9 910.6 407.2 911.1 400.5 911.7 400.5 912.2 400.5 912.7 397.2 913.2 403.9 913.7 403.9 914.3 397.2 914.8 393.8 915.3 393.8 915.8 397.2 916.3 393.8 916.9 397.2 917.4 390.5 917.9 393.8 918.4 390.5 918.9 390.5 919.5 390.5 920.0 390.5 920.5 393.8 921.0 393.8 921.5 393.8 922.1 393.8 922.6 390.5 923.1 390.5 923.6 393.8 924.1 390.5 924.7 393.8 925.2 393.8 925.7 387.2 926.2 383.8 926.7 383.8 927.3 387.2 927.8 390.5 928.3 393.8 928.8 387.2 929.3 387.2 929.9 383.8 930.4 390.5 930.9 383.8 931.4 390.5 931.9 387.2 932.5 390.5 933.0 390.5 933.5 383.8 934.0 383.8 934.6 390.5 935.1 390.5 935.6 390.5 936.1 383.8 936.6 387.2 937.2 383.8 937.7 383.8 938.2 390.5 938.7 383.8 939.2 387.2 939.8 383.8 940.3 390.5 940.8 383.8 941.3 383.8 941.8 387.2 942.4 383.8 942.9 390.5 943.4 390.5 943.9 387.2 944.4 383.8 945.0 387.2 945.5 387.2 946.0 387.2 946.5 387.2 947.0 387.2 947.6 390.5 948.1 387.2 948.6 387.2 949.1 390.5 949.6 387.2 950.2 390.5 950.7 390.5 951.2 387.2 951.7 390.5 952.2 397.2 952.8 393.8 953.3 390.5 953.8 387.2 954.3 397.2 954.8 393.8 955.4 390.5 955.9 387.2 956.4 387.2 956.9 390.5 957.4 390.5 958.0 390.5 958.5 387.2 959.0 387.2 959.5 383.8 960.0 390.5 960.6 390.5 961.1 390.5 961.6 383.8 962.1 383.8 962.6 383.8 963.2 387.2 963.7 390.5 964.2 383.8 964.7 390.5 965.2 383.8 965.8 390.5 966.3 387.2 966.8 383.8 967.3 390.5 967.8 390.5 968.4 383.8 968.9 387.2 969.4 383.8 969.9 387.2 970.5 387.2 971.0 387.2 971.5 383.8 972.0 387.2 972.5 387.2 973.1 387.2 973.6 383.8 974.1 390.5 974.6 390.5 975.1 387.2 975.7 393.8 976.2 393.8 976.7 390.5 977.2 390.5 977.7 390.5 978.3 387.2 978.8 387.2 979.3 393.8 979.8 390.5 980.3 390.5 980.9 390.5 981.4 393.8 981.9 393.8 982.4 390.5 982.9 393.8 983.5 387.2 984.0 387.2 984.5 393.8 985.0 397.2 985.5 393.8 986.1 387.2 986.6 393.8 987.1 387.2 987.6 387.2 988.1 387.2 988.7 393.8 989.2 393.8 989.7 390.5 990.2 390.5 990.7 383.8 991.3 390.5 991.8 390.5 992.3 390.5 992.8 390.5 993.3 390.5 993.9 387.2 994.4 387.2 994.9 383.8 995.4 393.8 995.9 390.5 996.5 387.2 997.0 390.5 997.5 390.5 998.0 387.2 998.5 393.8 999.1 387.2 999.6 390.5 1000.1 390.5 1000.6 393.8 1001.1 390.5 1001.7 387.2 1002.2 387.2 1002.7 383.8 1003.2 390.5 1003.7 383.8 1004.3 387.2 1004.8 383.8 1005.3 383.8 1005.8 383.8 1006.4 383.8 1006.9 383.8 1007.4 387.2 1007.9 390.5 1008.4 390.5 1009.0 387.2 1009.5 383.8 1010.0 383.8 1010.5 383.8 1011.0 390.5 1011.6 383.8 1012.1 383.8 1012.6 387.2 1013.1 387.2 1013.6 387.2 1014.2 387.2 1014.7 387.2 1015.2 390.5 1015.7 383.8 1016.2 387.2 1016.8 387.2 1017.3 380.5 1017.8 383.8 1018.3 387.2 1018.8 387.2 1019.4 387.2 1019.9 393.8 1020.4 383.8 1020.9 387.2 1021.4 390.5 1022.0 387.2 1022.5 387.2 1023.0 393.8" stroke="#c540b6" stroke-width="1.6"/>
<path d="M61.5 323.7h0M62.0 317.0h0M62.5 317.0h0M63.1 323.7h0M63.6 310.3h0M64.1 313.6h0M64.6 320.3h0M65.1 310.3h0M65.7 323.7h0M66.2 320.3h0M66.7 317.0h0M67.2 323.7h0M67.7 317.0h0M68.3 317.0h0M68.8 313.6h0M69.3 317.0h0M69.8 320.3h0M70.3 317.0h0M70.9 317.0h0M71.4 313.6h0M71.9 320.3h0M72.4 313.6h0M72.9 310.3h0M73.5 323.7h0M74.0 310.3h0M74.5 320.3h0M75.0 317.0h0M75.5 323.7h0M76.1 307.0h0M76.6 320.3h0M77.1 310.3h0M77.6 320.3h0M78.1 310.3h0M78.7 323.7h0M79.2 317.0h0M79.7 323.7h0M80.2 313.6h0M80.8 317.0h0M81.3 323.7h0M81.8 310.3h0M82.3 320.3h0M82.8 323.7h0M83.4 323.7h0M83.9 323.7h0M84.4 320.3h0M84.9 313.6h0M85.4 320.3h0M86.0 310.3h0M86.5 317.0h0M87.0 337.0h0M87.5 320.3h0M88.0 317.0h0M88.6 323.7h0M89.1 313.6h0M89.6 320.3h0M90.1 317.0h0M90.6 320.3h0M91.2 313.6h0M91.7 313.6h0M92.2 320.3h0M92.7 320.3h0M93.2 310.3h0M93.8 310.3h0M94.3 320.3h0M94.8 323.7h0M95.3 313.6h0M95.8 313.6h0M96.4 310.3h0M96.9 317.0h0M97.4 320.3h0M97.9 317.0h0M98.4 313.6h0M99.0 323.7h0M99.5 320.3h0M100.0 313.6h0M100.5 317.0h0M101.0 310.3h0M101.6 313.6h0M102.1 320.3h0M102.6 320.3h0M103.1 310.3h0M103.6 313.6h0M104.2 310.3h0M104.7 317.0h0M105.2 330.3h0M105.7 317.0h0M106.2 320.3h0M106.8 313.6h0M107.3 323.7h0M107.8 320.3h0M108.3 313.6h0M108.8 323.7h0M109.4 323.7h0M109.9 313.6h0M110.4 313.6h0M110.9 313.6h0M111.4 330.3h0M112.0 330.3h0M112.5 317.0h0M113.0 317.0h0M113.5 313.6h0M114.0 313.6h0M114.6 313.6h0M115.1 323.7h0M115.6 330.3h0M116.1 330.3h0M116.7 333.7h0M117.2 323.7h0M117.7 317.0h0M118.2 330.3h0M118.7 327.0h0M119.3 313.6h0M119.8 330.3h0M120.3 317.0h0M120.8 317.0h0M121.3 313.6h0M121.9 330.3h0M122.4 313.6h0M122.9 320.3h0M123.4 330.3h0M123.9 330.3h0M124.5 330.3h0M125.0 317.0h0M125.5 330.3h0M126.0 323.7h0M126.5 330.3h0M127.1 320.3h0M127.6 313.6h0M128.1 330.3h0M128.6 313.6h0M129.1 313.6h0M129.7 330.3h0M130.2 310.3h0M130.7 323.7h0M131.2 320.3h0M131.7 330.3h0M132.3 327.0h0M132.8 327.0h0M133.3 327.0h0M133.8 333.7h0M134.3 327.0h0M134.9 313.6h0M135.4 327.0h0M135.9 330.3h0M136.4 330.3h0M136.9 320.3h0M137.5 323.7h0M138.0 330.3h0M138.5 323.7h0M139.0 323.7h0M139.5 320.3h0M140.1 317.0h0M140.6 313.6h0M141.1 333.7h0M141.6 323.7h0M142.1 333.7h0M142.7 330.3h0M143.2 313.6h0M143.7 323.7h0M144.2 317.0h0M144.7 317.0h0M145.3 323.7h0M145.8 313.6h0M146.3 320.3h0M146.8 327.0h0M147.3 320.3h0M147.9 323.7h0M148.4 330.3h0M148.9 327.0h0M149.4 313.6h0M149.9 333.7h0M150.5 333.7h0M151.0 313.6h0M151.5 317.0h0M152.0 317.0h0M152.6 320.3h0M153.1 333.7h0M153.6 313.6h0M154.1 313.6h0M154.6 317.0h0M155.2 330.3h0M155.7 327.0h0M156.2 317.0h0M156.7 333.7h0M157.2 330.3h0M157.8 317.0h0M158.3 320.3h0M158.8 313.6h0M159.3 317.0h0M159.8 333.7h0M160.4 313.6h0M160.9 333.7h0M161.4 320.3h0M161.9 323.7h0M162.4 330.3h0M163.0 330.3h0M163.5 323.7h0M164.0 317.0h0M164.5 330.3h0M165.0 323.7h0M165.6 317.0h0M166.1 330.3h0M166.6 327.0h0M167.1 327.0h0M167.6 327.0h0M168.2 330.3h0M168.7 320.3h0M169.2 323.7h0M169.7 330.3h0M170.2 320.3h0M170.8 317.0h0M171.3 327.0h0M171.8 313.6h0M172.3 313.6h0M172.8 323.7h0M173.4 327.0h0M173.9 330.3h0M174.4 317.0h0M174.9 323.7h0M175.4 313.6h0M176.0 333.7h0M176.5 320.3h0M177.0 323.7h0M177.5 330.3h0M178.0 330.3h0M178.6 320.3h0M179.1 330.3h0M179.6 320.3h0M180.1 323.7h0M180.6 330.3h0M181.2 327.0h0M181.7 327.0h0M182.2 317.0h0M182.7 330.3h0M183.2 317.0h0M183.8 317.0h0M184.3 323.7h0M184.8 327.0h0M185.3 330.3h0M185.8 313.6h0M186.4 333.7h0M186.9 317.0h0M187.4 317.0h0M187.9 313.6h0M188.5 320.3h0M189.0 327.0h0M189.5 330.3h0M190.0 330.3h0M190.5 327.0h0M191.1 323.7h0M191.6 327.0h0M192.1 327.0h0M192.6 327.0h0M193.1 330.3h0M193.7 317.0h0M194.2 320.3h0M194.7 317.0h0M195.2 320.3h0M195.7 330.3h0M196.3 323.7h0M196.8 330.3h0M197.3 320.3h0M197.8 327.0h0M198.3 327.0h0M198.9 320.3h0M199.4 327.0h0M199.9 320.3h0M200.4 320.3h0M200.9 330.3h0M201.5 320.3h0M202.0 327.0h0M202.5 327.0h0M203.0 330.3h0M203.5 323.7h0M204.1 323.7h0M204.6 327.0h0M205.1 320.3h0M205.6 330.3h0M206.1 323.7h0M206.7 313.6h0M207.2 320.3h0M207.7 330.3h0M208.2 320.3h0M208.7 327.0h0M209.3 320.3h0M209.8 327.0h0M210.3 327.0h0M210.8 327.0h0M211.3 327.0h0M211.9 327.0h0M212.4 320.3h0M212.9 327.0h0M213.4 327.0h0M213.9 307.0h0M214.5 327.0h0M215.0 327.0h0M215.5 323.7h0M216.0 320.3h0M216.5 327.0h0M217.1 320.3h0M217.6 320.3h0M218.1 320.3h0M218.6 323.7h0M219.1 323.7h0M219.7 320.3h0M220.2 327.0h0M220.7 327.0h0M221.2 327.0h0M221.8 320.3h0M222.3 320.3h0M222.8 330.3h0M223.3 320.3h0M223.8 330.3h0M224.4 330.3h0M224.9 330.3h0M225.4 327.0h0M225.9 333.7h0M226.4 333.7h0M227.0 333.7h0M227.5 330.3h0M228.0 333.7h0M228.5 333.7h0M229.0 333.7h0M229.6 333.7h0M230.1 330.3h0M230.6 333.7h0M231.1 333.7h0M231.6 333.7h0M232.2 337.0h0M232.7 333.7h0M233.2 337.0h0M233.7 330.3h0M234.2 330.3h0M234.8 333.7h0M235.3 337.0h0M235.8 340.4h0M236.3 340.4h0M236.8 330.3h0M237.4 330.3h0M237.9 337.0h0M238.4 343.7h0M238.9 337.0h0M239.4 333.7h0M240.0 337.0h0M240.5 340.4h0M241.0 343.7h0M241.5 343.7h0M242.0 337.0h0M242.6 337.0h0M243.1 340.4h0M243.6 347.1h0M244.1 343.7h0M244.6 350.4h0M245.2 343.7h0M245.7 340.4h0M246.2 340.4h0M246.7 347.1h0M247.2 347.1h0M247.8 350.4h0M248.3 350.4h0M248.8 350.4h0M249.3 340.4h0M249.8 337.0h0M250.4 343.7h0M250.9 343.7h0M251.4 350.4h0M251.9 350.4h0M252.4 343.7h0M253.0 347.1h0M253.5 343.7h0M254.0 343.7h0M254.5 340.4h0M255.0 343.7h0M255.6 340.4h0M256.1 347.1h0M256.6 340.4h0M257.1 337.0h0M257.7 347.1h0M258.2 337.0h0M258.7 340.4h0M259.2 340.4h0M259.7 330.3h0M260.3 340.4h0M260.8 337.0h0M261.3 330.3h0M261.8 330.3h0M262.3 340.4h0M262.9 330.3h0M263.4 337.0h0M263.9 330.3h0M264.4 340.4h0M264.9 340.4h0M265.5 330.3h0M266.0 330.3h0M266.5 337.0h0M267.0 330.3h0M267.5 330.3h0M268.1 337.0h0M268.6 330.3h0M269.1 330.3h0M269.6 340.4h0M270.1 337.0h0M270.7 340.4h0M271.2 330.3h0M271.7 327.0h0M272.2 333.7h0M272.7 333.7h0M273.3 330.3h0M273.8 327.0h0M274.3 343.7h0M274.8 330.3h0M275.3 337.0h0M275.9 327.0h0M276.4 333.7h0M276.9 327.0h0M277.4 337.0h0M277.9 330.3h0M278.5 337.0h0M279.0 327.0h0M279.5 330.3h0M280.0 333.7h0M280.5 333.7h0M281.1 320.3h0M281.6 327.0h0M282.1 330.3h0M282.6 333.7h0M283.1 337.0h0M283.7 340.4h0M284.2 337.0h0M284.7 337.0h0M285.2 337.0h0M285.7 340.4h0M286.3 333.7h0M286.8 337.0h0M287.3 343.7h0M287.8 343.7h0M288.3 347.1h0M288.9 337.0h0M289.4 337.0h0M289.9 337.0h0M290.4 343.7h0M290.9 343.7h0M291.5 340.4h0M292.0 340.4h0M292.5 340.4h0M293.0 347.1h0M293.6 347.1h0M294.1 347.1h0M294.6 350.4h0M295.1 353.7h0M295.6 343.7h0M296.2 340.4h0M296.7 350.4h0M297.2 343.7h0M297.7 350.4h0M298.2 350.4h0M298.8 343.7h0M299.3 343.7h0M299.8 350.4h0M300.3 343.7h0M300.8 350.4h0M301.4 353.7h0M301.9 347.1h0M302.4 350.4h0M302.9 343.7h0M303.4 347.1h0M304.0 347.1h0M304.5 340.4h0M305.0 343.7h0M305.5 337.0h0M306.0 333.7h0M306.6 337.0h0M307.1 333.7h0M307.6 337.0h0M308.1 333.7h0M308.6 340.4h0M309.2 340.4h0M309.7 340.4h0M310.2 337.0h0M310.7 337.0h0M311.2 333.7h0M311.8 340.4h0M312.3 333.7h0M312.8 333.7h0M313.3 337.0h0M313.8 333.7h0M314.4 337.0h0M314.9 337.0h0M315.4 333.7h0M315.9 343.7h0M316.4 340.4h0M317.0 333.7h0M317.5 343.7h0M318.0 343.7h0M318.5 340.4h0M319.0 343.7h0M319.6 343.7h0M320.1 347.1h0M320.6 337.0h0M321.1 343.7h0M321.6 347.1h0M322.2 347.1h0M322.7 337.0h0M323.2 343.7h0M323.7 347.1h0M324.2 340.4h0M324.8 337.0h0M325.3 340.4h0M325.8 337.0h0M326.3 343.7h0M326.8 340.4h0M327.4 343.7h0M327.9 337.0h0M328.4 343.7h0M328.9 343.7h0M329.5 337.0h0M330.0 343.7h0M330.5 343.7h0M331.0 340.4h0M331.5 343.7h0M332.1 343.7h0M332.6 343.7h0M333.1 337.0h0M333.6 340.4h0M334.1 337.0h0M334.7 340.4h0M335.2 337.0h0M335.7 340.4h0M336.2 343.7h0M336.7 337.0h0M337.3 333.7h0M337.8 340.4h0M338.3 340.4h0M338.8 333.7h0M339.3 333.7h0M339.9 333.7h0M340.4 337.0h0M340.9 330.3h0M341.4 340.4h0M341.9 333.7h0M342.5 333.7h0M343.0 333.7h0M343.5 333.7h0M344.0 330.3h0M344.5 337.0h0M345.1 330.3h0M345.6 330.3h0M346.1 330.3h0M346.6 333.7h0M347.1 337.0h0M347.7 333.7h0M348.2 337.0h0M348.7 337.0h0M349.2 337.0h0M349.7 327.0h0M350.3 337.0h0M350.8 330.3h0M351.3 330.3h0M351.8 333.7h0M352.3 333.7h0M352.9 330.3h0M353.4 340.4h0M353.9 330.3h0M354.4 337.0h0M354.9 337.0h0M355.5 333.7h0M356.0 337.0h0M356.5 337.0h0M357.0 337.0h0M357.5 330.3h0M358.1 327.0h0M358.6 333.7h0M359.1 337.0h0M359.6 330.3h0M360.1 330.3h0M360.7 337.0h0M361.2 340.4h0M361.7 330.3h0M362.2 333.7h0M362.7 340.4h0M363.3 330.3h0M363.8 330.3h0M364.3 330.3h0M364.8 337.0h0M365.4 327.0h0M365.9 327.0h0M366.4 330.3h0M366.9 330.3h0M367.4 337.0h0M368.0 333.7h0M368.5 333.7h0M369.0 337.0h0M369.5 330.3h0M370.0 333.7h0M370.6 333.7h0M371.1 327.0h0M371.6 333.7h0M372.1 333.7h0M372.6 330.3h0M373.2 330.3h0M373.7 333.7h0M374.2 327.0h0M374.7 337.0h0M375.2 327.0h0M375.8 327.0h0M376.3 333.7h0M376.8 330.3h0M377.3 333.7h0M377.8 330.3h0M378.4 327.0h0M378.9 330.3h0M379.4 327.0h0M379.9 333.7h0M380.4 330.3h0M381.0 323.7h0M381.5 327.0h0M382.0 330.3h0M382.5 323.7h0M383.0 333.7h0M383.6 333.7h0M384.1 333.7h0M384.6 327.0h0M385.1 327.0h0M385.6 327.0h0M386.2 323.7h0M386.7 323.7h0M387.2 333.7h0M387.7 333.7h0M388.2 333.7h0M388.8 327.0h0M389.3 327.0h0M389.8 330.3h0M390.3 333.7h0M390.8 327.0h0M391.4 327.0h0M391.9 333.7h0M392.4 330.3h0M392.9 333.7h0M393.4 330.3h0M394.0 330.3h0M394.5 327.0h0M395.0 327.0h0M395.5 333.7h0M396.0 337.0h0M396.6 330.3h0M397.1 337.0h0M397.6 330.3h0M398.1 330.3h0M398.6 327.0h0M399.2 330.3h0M399.7 337.0h0M400.2 333.7h0M400.7 330.3h0M401.3 327.0h0M401.8 333.7h0M402.3 330.3h0M402.8 323.7h0M403.3 340.4h0M403.9 340.4h0M404.4 330.3h0M404.9 330.3h0M405.4 340.4h0M405.9 333.7h0M406.5 330.3h0M407.0 333.7h0M407.5 337.0h0M408.0 340.4h0M408.5 337.0h0M409.1 337.0h0M409.6 340.4h0M410.1 340.4h0M410.6 337.0h0M411.1 337.0h0M411.7 333.7h0M412.2 337.0h0M412.7 343.7h0M413.2 340.4h0M413.7 340.4h0M414.3 337.0h0M414.8 333.7h0M415.3 343.7h0M415.8 340.4h0M416.3 343.7h0M416.9 347.1h0M417.4 343.7h0M417.9 340.4h0M418.4 340.4h0M418.9 340.4h0M419.5 340.4h0M420.0 347.1h0M420.5 340.4h0M421.0 340.4h0M421.5 340.4h0M422.1 347.1h0M422.6 340.4h0M423.1 343.7h0M423.6 340.4h0M424.1 347.1h0M424.7 350.4h0M425.2 353.7h0M425.7 343.7h0M426.2 350.4h0M426.7 353.7h0M427.3 350.4h0M427.8 350.4h0M428.3 350.4h0M428.8 353.7h0M429.3 343.7h0M429.9 357.1h0M430.4 350.4h0M430.9 347.1h0M431.4 350.4h0M431.9 350.4h0M432.5 357.1h0M433.0 353.7h0M433.5 350.4h0M434.0 350.4h0M434.5 357.1h0M435.1 360.4h0M435.6 353.7h0M436.1 353.7h0M436.6 350.4h0M437.2 360.4h0M437.7 357.1h0M438.2 357.1h0M438.7 353.7h0M439.2 357.1h0M439.8 360.4h0M440.3 360.4h0M440.8 353.7h0M441.3 350.4h0M441.8 360.4h0M442.4 353.7h0M442.9 360.4h0M443.4 360.4h0M443.9 353.7h0M444.4 360.4h0M445.0 353.7h0M445.5 350.4h0M446.0 360.4h0M446.5 360.4h0M447.0 357.1h0M447.6 353.7h0M448.1 363.8h0M448.6 363.8h0M449.1 363.8h0M449.6 363.8h0M450.2 360.4h0M450.7 363.8h0M451.2 363.8h0M451.7 360.4h0M452.2 367.1h0M452.8 363.8h0M453.3 367.1h0M453.8 367.1h0M454.3 370.4h0M454.8 363.8h0M455.4 363.8h0M455.9 360.4h0M456.4 367.1h0M456.9 367.1h0M457.4 363.8h0M458.0 363.8h0M458.5 363.8h0M459.0 370.4h0M459.5 370.4h0M460.0 363.8h0M460.6 370.4h0M461.1 367.1h0M461.6 367.1h0M462.1 363.8h0M462.6 370.4h0M463.2 363.8h0M463.7 367.1h0M464.2 363.8h0M464.7 370.4h0M465.2 363.8h0M465.8 367.1h0M466.3 363.8h0M466.8 363.8h0M467.3 367.1h0M467.8 367.1h0M468.4 370.4h0M468.9 363.8h0M469.4 367.1h0M469.9 373.8h0M470.4 370.4h0M471.0 367.1h0M471.5 370.4h0M472.0 363.8h0M472.5 370.4h0M473.1 367.1h0M473.6 373.8h0M474.1 367.1h0M474.6 363.8h0M475.1 373.8h0M475.7 373.8h0M476.2 373.8h0M476.7 370.4h0M477.2 370.4h0M477.7 377.1h0M478.3 370.4h0M478.8 370.4h0M479.3 370.4h0M479.8 367.1h0M480.3 367.1h0M480.9 377.1h0M481.4 373.8h0M481.9 377.1h0M482.4 370.4h0M482.9 373.8h0M483.5 380.5h0M484.0 377.1h0M484.5 373.8h0M485.0 373.8h0M485.5 380.5h0M486.1 380.5h0M486.6 377.1h0M487.1 377.1h0M487.6 383.8h0M488.1 380.5h0M488.7 383.8h0M489.2 380.5h0M489.7 383.8h0M490.2 377.1h0M490.7 387.2h0M491.3 377.1h0M491.8 387.2h0M492.3 377.1h0M492.8 380.5h0M493.3 387.2h0M493.9 377.1h0M494.4 383.8h0M494.9 380.5h0M495.4 387.2h0M495.9 377.1h0M496.5 387.2h0M497.0 377.1h0M497.5 377.1h0M498.0 380.5h0M498.5 380.5h0M499.1 383.8h0M499.6 383.8h0M500.1 383.8h0M500.6 380.5h0M501.1 383.8h0M501.7 377.1h0M502.2 377.1h0M502.7 380.5h0M503.2 380.5h0M503.7 383.8h0M504.3 383.8h0M504.8 377.1h0M505.3 377.1h0M505.8 380.5h0M506.3 377.1h0M506.9 377.1h0M507.4 383.8h0M507.9 377.1h0M508.4 377.1h0M509.0 377.1h0M509.5 383.8h0M510.0 380.5h0M510.5 383.8h0M511.0 373.8h0M511.6 383.8h0M512.1 373.8h0M512.6 377.1h0M513.1 373.8h0M513.6 383.8h0M514.2 380.5h0M514.7 380.5h0M515.2 380.5h0M515.7 383.8h0M516.2 380.5h0M516.8 373.8h0M517.3 380.5h0M517.8 383.8h0M518.3 377.1h0M518.8 383.8h0M519.4 380.5h0M519.9 373.8h0M520.4 383.8h0M520.9 377.1h0M521.4 373.8h0M522.0 380.5h0M522.5 380.5h0M523.0 383.8h0M523.5 383.8h0M524.0 383.8h0M524.6 383.8h0M525.1 387.2h0M525.6 383.8h0M526.1 387.2h0M526.6 380.5h0M527.2 383.8h0M527.7 383.8h0M528.2 390.5h0M528.7 390.5h0M529.2 390.5h0M529.8 393.8h0M530.3 390.5h0M530.8 383.8h0M531.3 387.2h0M531.8 387.2h0M532.4 387.2h0M532.9 393.8h0M533.4 390.5h0M533.9 387.2h0M534.4 387.2h0M535.0 387.2h0M535.5 393.8h0M536.0 393.8h0M536.5 383.8h0M537.0 387.2h0M537.6 393.8h0M538.1 387.2h0M538.6 393.8h0M539.1 387.2h0M539.6 393.8h0M540.2 393.8h0M540.7 387.2h0M541.2 393.8h0M541.7 393.8h0M542.2 393.8h0M542.8 390.5h0M543.3 393.8h0M543.8 393.8h0M544.3 387.2h0M544.9 387.2h0M545.4 387.2h0M545.9 387.2h0M546.4 393.8h0M546.9 387.2h0M547.5 390.5h0M548.0 393.8h0M548.5 393.8h0M549.0 390.5h0M549.5 387.2h0M550.1 390.5h0M550.6 393.8h0M551.1 393.8h0M551.6 393.8h0M552.1 383.8h0M552.7 393.8h0M553.2 387.2h0M553.7 387.2h0M554.2 387.2h0M554.7 390.5h0M555.3 383.8h0M555.8 387.2h0M556.3 387.2h0M556.8 393.8h0M557.3 387.2h0M557.9 390.5h0M558.4 387.2h0M558.9 397.2h0M559.4 393.8h0M559.9 397.2h0M560.5 390.5h0M561.0 390.5h0M561.5 400.5h0M562.0 403.9h0M562.5 400.5h0M563.1 400.5h0M563.6 397.2h0M564.1 397.2h0M564.6 403.9h0M565.1 397.2h0M565.7 400.5h0M566.2 400.5h0M566.7 400.5h0M567.2 397.2h0M567.7 393.8h0M568.3 393.8h0M568.8 400.5h0M569.3 400.5h0M569.8 393.8h0M570.3 400.5h0M570.9 393.8h0M571.4 397.2h0M571.9 397.2h0M572.4 400.5h0M572.9 393.8h0M573.5 400.5h0M574.0 397.2h0M574.5 393.8h0M575.0 397.2h0M575.5 393.8h0M576.1 397.2h0M576.6 393.8h0M577.1 397.2h0M577.6 400.5h0M578.2 397.2h0M578.7 400.5h0M579.2 393.8h0M579.7 400.5h0M580.2 393.8h0M580.8 403.9h0M581.3 397.2h0M581.8 397.2h0M582.3 393.8h0M582.8 393.8h0M583.4 393.8h0M583.9 397.2h0M584.4 400.5h0M584.9 400.5h0M585.4 397.2h0M586.0 400.5h0M586.5 403.9h0M587.0 400.5h0M587.5 397.2h0M588.0 403.9h0M588.6 400.5h0M589.1 400.5h0M589.6 400.5h0M590.1 403.9h0M590.6 403.9h0M591.2 403.9h0M591.7 403.9h0M592.2 400.5h0M592.7 403.9h0M593.2 403.9h0M593.8 400.5h0M594.3 403.9h0M594.8 400.5h0M595.3 397.2h0M595.8 397.2h0M596.4 403.9h0M596.9 400.5h0M597.4 403.9h0M597.9 400.5h0M598.4 400.5h0M599.0 397.2h0M599.5 400.5h0M600.0 400.5h0M600.5 400.5h0M601.0 400.5h0M601.6 403.9h0M602.1 400.5h0M602.6 400.5h0M603.1 400.5h0M603.6 403.9h0M604.2 397.2h0M604.7 397.2h0M605.2 397.2h0M605.7 403.9h0M606.2 400.5h0M606.8 397.2h0M607.3 410.5h0M607.8 403.9h0M608.3 397.2h0M608.8 400.5h0M609.4 397.2h0M609.9 400.5h0M610.4 400.5h0M610.9 400.5h0M611.4 397.2h0M612.0 400.5h0M612.5 400.5h0M613.0 403.9h0M613.5 400.5h0M614.1 400.5h0M614.6 400.5h0M615.1 400.5h0M615.6 397.2h0M616.1 403.9h0M616.7 397.2h0M617.2 397.2h0M617.7 397.2h0M618.2 403.9h0M618.7 397.2h0M619.3 397.2h0M619.8 397.2h0M620.3 397.2h0M620.8 400.5h0M621.3 400.5h0M621.9 397.2h0M622.4 403.9h0M622.9 400.5h0M623.4 397.2h0M623.9 403.9h0M624.5 400.5h0M625.0 397.2h0M625.5 397.2h0M626.0 400.5h0M626.5 400.5h0M627.1 400.5h0M627.6 397.2h0M628.1 400.5h0M628.6 400.5h0M629.1 397.2h0M629.7 393.8h0M630.2 400.5h0M630.7 397.2h0M631.2 400.5h0M631.7 403.9h0M632.3 397.2h0M632.8 397.2h0M633.3 400.5h0M633.8 400.5h0M634.3 400.5h0M634.9 393.8h0M635.4 400.5h0M635.9 400.5h0M636.4 400.5h0M636.9 397.2h0M637.5 400.5h0M638.0 400.5h0M638.5 397.2h0M639.0 393.8h0M639.5 397.2h0M640.1 393.8h0M640.6 400.5h0M641.1 400.5h0M641.6 397.2h0M642.1 393.8h0M642.7 400.5h0M643.2 400.5h0M643.7 393.8h0M644.2 397.2h0M644.7 393.8h0M645.3 400.5h0M645.8 397.2h0M646.3 400.5h0M646.8 400.5h0M647.3 393.8h0M647.9 393.8h0M648.4 397.2h0M648.9 393.8h0M649.4 393.8h0M650.0 393.8h0M650.5 400.5h0M651.0 393.8h0M651.5 397.2h0M652.0 393.8h0M652.6 400.5h0M653.1 397.2h0M653.6 397.2h0M654.1 403.9h0M654.6 403.9h0M655.2 400.5h0M655.7 400.5h0M656.2 400.5h0M656.7 407.2h0M657.2 403.9h0M657.8 407.2h0M658.3 400.5h0M658.8 403.9h0M659.3 403.9h0M659.8 403.9h0M660.4 400.5h0M660.9 403.9h0M661.4 407.2h0M661.9 400.5h0M662.4 407.2h0M663.0 400.5h0M663.5 403.9h0M664.0 400.5h0M664.5 400.5h0M665.0 397.2h0M665.6 400.5h0M666.1 400.5h0M666.6 400.5h0M667.1 397.2h0M667.6 400.5h0M668.2 403.9h0M668.7 400.5h0M669.2 403.9h0M669.7 397.2h0M670.2 397.2h0M670.8 403.9h0M671.3 400.5h0M671.8 407.2h0M672.3 400.5h0M672.8 400.5h0M673.4 400.5h0M673.9 400.5h0M674.4 400.5h0M674.9 403.9h0M675.4 400.5h0M676.0 400.5h0M676.5 403.9h0M677.0 400.5h0M677.5 407.2h0M678.0 407.2h0M678.6 400.5h0M679.1 400.5h0M679.6 403.9h0M680.1 407.2h0M680.6 407.2h0M681.2 403.9h0M681.7 403.9h0M682.2 400.5h0M682.7 403.9h0M683.2 407.2h0M683.8 407.2h0M684.3 400.5h0M684.8 403.9h0M685.3 407.2h0M685.9 403.9h0M686.4 407.2h0M686.9 407.2h0M687.4 403.9h0M687.9 407.2h0M688.5 407.2h0M689.0 407.2h0M689.5 403.9h0M690.0 400.5h0M690.5 410.5h0M691.1 400.5h0M691.6 407.2h0M692.1 400.5h0M692.6 407.2h0M693.1 403.9h0M693.7 403.9h0M694.2 403.9h0M694.7 403.9h0M695.2 410.5h0M695.7 407.2h0M696.3 407.2h0M696.8 403.9h0M697.3 407.2h0M697.8 410.5h0M698.3 407.2h0M698.9 403.9h0M699.4 400.5h0M699.9 403.9h0M700.4 403.9h0M700.9 407.2h0M701.5 403.9h0M702.0 407.2h0M702.5 410.5h0M703.0 403.9h0M703.5 403.9h0M704.1 400.5h0M704.6 407.2h0M705.1 403.9h0M705.6 403.9h0M706.1 407.2h0M706.7 407.2h0M707.2 403.9h0M707.7 403.9h0M708.2 403.9h0M708.7 403.9h0M709.3 403.9h0M709.8 400.5h0M710.3 403.9h0M710.8 407.2h0M711.3 403.9h0M711.9 403.9h0M712.4 400.5h0M712.9 403.9h0M713.4 407.2h0M713.9 403.9h0M714.5 407.2h0M715.0 400.5h0M715.5 403.9h0M716.0 403.9h0M716.5 407.2h0M717.1 407.2h0M717.6 407.2h0M718.1 407.2h0M718.6 407.2h0M719.1 413.9h0M719.7 413.9h0M720.2 417.2h0M720.7 417.2h0M721.2 413.9h0M721.8 413.9h0M722.3 417.2h0M722.8 413.9h0M723.3 413.9h0M723.8 417.2h0M724.4 420.6h0M724.9 417.2h0M725.4 413.9h0M725.9 417.2h0M726.4 413.9h0M727.0 417.2h0M727.5 413.9h0M728.0 410.5h0M728.5 420.6h0M729.0 410.5h0M729.6 410.5h0M730.1 417.2h0M730.6 413.9h0M731.1 410.5h0M731.6 413.9h0M732.2 420.6h0M732.7 427.3h0M733.2 417.2h0M733.7 417.2h0M734.2 413.9h0M734.8 417.2h0M735.3 417.2h0M735.8 410.5h0M736.3 417.2h0M736.8 413.9h0M737.4 417.2h0M737.9 413.9h0M738.4 410.5h0M738.9 417.2h0M739.4 417.2h0M740.0 413.9h0M740.5 410.5h0M741.0 410.5h0M741.5 413.9h0M742.0 413.9h0M742.6 413.9h0M743.1 407.2h0M743.6 403.9h0M744.1 410.5h0M744.6 407.2h0M745.2 410.5h0M745.7 407.2h0M746.2 410.5h0M746.7 407.2h0M747.2 407.2h0M747.8 403.9h0M748.3 403.9h0M748.8 403.9h0M749.3 403.9h0M749.8 407.2h0M750.4 407.2h0M750.9 403.9h0M751.4 407.2h0M751.9 403.9h0M752.4 403.9h0M753.0 410.5h0M753.5 410.5h0M754.0 410.5h0M754.5 403.9h0M755.0 403.9h0M755.6 403.9h0M756.1 403.9h0M756.6 403.9h0M757.1 407.2h0M757.7 403.9h0M758.2 410.5h0M758.7 407.2h0M759.2 407.2h0M759.7 413.9h0M760.3 407.2h0M760.8 413.9h0M761.3 413.9h0M761.8 407.2h0M762.3 413.9h0M762.9 413.9h0M763.4 407.2h0M763.9 407.2h0M764.4 410.5h0M764.9 407.2h0M765.5 417.2h0M766.0 410.5h0M766.5 410.5h0M767.0 410.5h0M767.5 410.5h0M768.1 410.5h0M768.6 413.9h0M769.1 410.5h0M769.6 407.2h0M770.1 407.2h0M770.7 407.2h0M771.2 413.9h0M771.7 413.9h0M772.2 410.5h0M772.7 410.5h0M773.3 410.5h0M773.8 407.2h0M774.3 413.9h0M774.8 413.9h0M775.3 410.5h0M775.9 410.5h0M776.4 407.2h0M776.9 407.2h0M777.4 413.9h0M777.9 407.2h0M778.5 413.9h0M779.0 413.9h0M779.5 407.2h0M780.0 413.9h0M780.5 407.2h0M781.1 407.2h0M781.6 410.5h0M782.1 403.9h0M782.6 403.9h0M783.1 407.2h0M783.7 407.2h0M784.2 410.5h0M784.7 407.2h0M785.2 410.5h0M785.7 403.9h0M786.3 407.2h0M786.8 410.5h0M787.3 403.9h0M787.8 403.9h0M788.3 403.9h0M788.9 407.2h0M789.4 410.5h0M789.9 410.5h0M790.4 407.2h0M790.9 403.9h0M791.5 410.5h0M792.0 407.2h0M792.5 403.9h0M793.0 403.9h0M793.6 403.9h0M794.1 407.2h0M794.6 410.5h0M795.1 407.2h0M795.6 410.5h0M796.2 403.9h0M796.7 403.9h0M797.2 407.2h0M797.7 407.2h0M798.2 407.2h0M798.8 403.9h0M799.3 410.5h0M799.8 410.5h0M800.3 407.2h0M800.8 403.9h0M801.4 403.9h0M801.9 407.2h0M802.4 410.5h0M802.9 403.9h0M803.4 407.2h0M804.0 410.5h0M804.5 410.5h0M805.0 407.2h0M805.5 407.2h0M806.0 410.5h0M806.6 413.9h0M807.1 413.9h0M807.6 407.2h0M808.1 407.2h0M808.6 413.9h0M809.2 413.9h0M809.7 413.9h0M810.2 413.9h0M810.7 413.9h0M811.2 413.9h0M811.8 407.2h0M812.3 413.9h0M812.8 410.5h0M813.3 410.5h0M813.8 413.9h0M814.4 410.5h0M814.9 410.5h0M815.4 413.9h0M815.9 410.5h0M816.4 413.9h0M817.0 413.9h0M817.5 413.9h0M818.0 410.5h0M818.5 413.9h0M819.0 413.9h0M819.6 410.5h0M820.1 410.5h0M820.6 410.5h0M821.1 413.9h0M821.6 413.9h0M822.2 410.5h0M822.7 410.5h0M823.2 410.5h0M823.7 413.9h0M824.2 410.5h0M824.8 413.9h0M825.3 410.5h0M825.8 413.9h0M826.3 410.5h0M826.8 410.5h0M827.4 407.2h0M827.9 413.9h0M828.4 417.2h0M828.9 413.9h0M829.5 417.2h0M830.0 413.9h0M830.5 417.2h0M831.0 410.5h0M831.5 413.9h0M832.1 413.9h0M832.6 407.2h0M833.1 407.2h0M833.6 410.5h0M834.1 413.9h0M834.7 410.5h0M835.2 407.2h0M835.7 413.9h0M836.2 410.5h0M836.7 407.2h0M837.3 407.2h0M837.8 410.5h0M838.3 403.9h0M838.8 407.2h0M839.3 407.2h0M839.9 410.5h0M840.4 410.5h0M840.9 407.2h0M841.4 407.2h0M841.9 407.2h0M842.5 407.2h0M843.0 410.5h0M843.5 407.2h0M844.0 410.5h0M844.5 407.2h0M845.1 410.5h0M845.6 407.2h0M846.1 407.2h0M846.6 410.5h0M847.1 407.2h0M847.7 410.5h0M848.2 413.9h0M848.7 413.9h0M849.2 410.5h0M849.7 407.2h0M850.3 407.2h0M850.8 403.9h0M851.3 403.9h0M851.8 407.2h0M852.3 410.5h0M852.9 407.2h0M853.4 410.5h0M853.9 410.5h0M854.4 407.2h0M854.9 410.5h0M855.5 407.2h0M856.0 410.5h0M856.5 410.5h0M857.0 410.5h0M857.5 407.2h0M858.1 410.5h0M858.6 407.2h0M859.1 410.5h0M859.6 407.2h0M860.1 403.9h0M860.7 407.2h0M861.2 410.5h0M861.7 403.9h0M862.2 410.5h0M862.8 413.9h0M863.3 410.5h0M863.8 410.5h0M864.3 410.5h0M864.8 410.5h0M865.4 410.5h0M865.9 413.9h0M866.4 410.5h0M866.9 407.2h0M867.4 410.5h0M868.0 413.9h0M868.5 413.9h0M869.0 410.5h0M869.5 410.5h0M870.0 407.2h0M870.6 413.9h0M871.1 413.9h0M871.6 413.9h0M872.1 410.5h0M872.6 410.5h0M873.2 407.2h0M873.7 410.5h0M874.2 413.9h0M874.7 410.5h0M875.2 413.9h0M875.8 413.9h0M876.3 413.9h0M876.8 413.9h0M877.3 410.5h0M877.8 410.5h0M878.4 407.2h0M878.9 407.2h0M879.4 410.5h0M879.9 410.5h0M880.4 413.9h0M881.0 413.9h0M881.5 410.5h0M882.0 410.5h0M882.5 407.2h0M883.0 410.5h0M883.6 410.5h0M884.1 410.5h0M884.6 410.5h0M885.1 410.5h0M885.6 410.5h0M886.2 407.2h0M886.7 407.2h0M887.2 403.9h0M887.7 400.5h0M888.2 407.2h0M888.8 403.9h0M889.3 400.5h0M889.8 400.5h0M890.3 407.2h0M890.8 403.9h0M891.4 407.2h0M891.9 400.5h0M892.4 403.9h0M892.9 407.2h0M893.4 400.5h0M894.0 407.2h0M894.5 407.2h0M895.0 407.2h0M895.5 400.5h0M896.0 400.5h0M896.6 397.2h0M897.1 400.5h0M897.6 403.9h0M898.1 397.2h0M898.7 403.9h0M899.2 400.5h0M899.7 403.9h0M900.2 397.2h0M900.7 403.9h0M901.3 400.5h0M901.8 397.2h0M902.3 400.5h0M902.8 403.9h0M903.3 403.9h0M903.9 397.2h0M904.4 400.5h0M904.9 400.5h0M905.4 403.9h0M905.9 403.9h0M906.5 403.9h0M907.0 400.5h0M907.5 403.9h0M908.0 400.5h0M908.5 397.2h0M909.1 403.9h0M909.6 400.5h0M910.1 403.9h0M910.6 407.2h0M911.1 400.5h0M911.7 400.5h0M912.2 400.5h0M912.7 397.2h0M913.2 403.9h0M913.7 403.9h0M914.3 397.2h0M914.8 393.8h0M915.3 393.8h0M915.8 397.2h0M916.3 393.8h0M916.9 397.2h0M917.4 390.5h0M917.9 393.8h0M918.4 390.5h0M918.9 390.5h0M919.5 390.5h0M920.0 390.5h0M920.5 393.8h0M921.0 393.8h0M921.5 393.8h0M922.1 393.8h0M922.6 390.5h0M923.1 390.5h0M923.6 393.8h0M924.1 390.5h0M924.7 393.8h0M925.2 393.8h0M925.7 387.2h0M926.2 383.8h0M926.7 383.8h0M927.3 387.2h0M927.8 390.5h0M928.3 393.8h0M928.8 387.2h0M929.3 387.2h0M929.9 383.8h0M930.4 390.5h0M930.9 383.8h0M931.4 390.5h0M931.9 387.2h0M932.5 390.5h0M933.0 390.5h0M933.5 383.8h0M934.0 383.8h0M934.6 390.5h0M935.1 390.5h0M935.6 390.5h0M936.1 383.8h0M936.6 387.2h0M937.2 383.8h0M937.7 383.8h0M938.2 390.5h0M938.7 383.8h0M939.2 387.2h0M939.8 383.8h0M940.3 390.5h0M940.8 383.8h0M941.3 383.8h0M941.8 387.2h0M942.4 383.8h0M942.9 390.5h0M943.4 390.5h0M943.9 387.2h0M944.4 383.8h0M945.0 387.2h0M945.5 387.2h0M946.0 387.2h0M946.5 387.2h0M947.0 387.2h0M947.6 390.5h0M948.1 387.2h0M948.6 387.2h0M949.1 390.5h0M949.6 387.2h0M950.2 390.5h0M950.7 390.5h0M951.2 387.2h0M951.7 390.5h0M952.2 397.2h0M952.8 393.8h0M953.3 390.5h0M953.8 387.2h0M954.3 397.2h0M954.8 393.8h0M955.4 390.5h0M955.9 387.2h0M956.4 387.2h0M956.9 390.5h0M957.4 390.5h0M958.0 390.5h0M958.5 387.2h0M959.0 387.2h0M959.5 383.8h0M960.0 390.5h0M960.6 390.5h0M961.1 390.5h0M961.6 383.8h0M962.1 383.8h0M962.6 383.8h0M963.2 387.2h0M963.7 390.5h0M964.2 383.8h0M964.7 390.5h0M965.2 383.8h0M965.8 390.5h0M966.3 387.2h0M966.8 383.8h0M967.3 390.5h0M967.8 390.5h0M968.4 383.8h0M968.9 387.2h0M969.4 383.8h0M969.9 387.2h0M970.5 387.2h0M971.0 387.2h0M971.5 383.8h0M972.0 387.2h0M972.5 387.2h0M973.1 387.2h0M973.6 383.8h0M974.1 390.5h0M974.6 390.5h0M975.1 387.2h0M975.7 393.8h0M976.2 393.8h0M976.7 390.5h0M977.2 390.5h0M977.7 390.5h0M978.3 387.2h0M978.8 387.2h0M979.3 393.8h0M979.8 390.5h0M980.3 390.5h0M980.9 390.5h0M981.4 393.8h0M981.9 393.8h0M982.4 390.5h0M982.9 393.8h0M983.5 387.2h0M984.0 387.2h0M984.5 393.8h0M985.0 397.2h0M985.5 393.8h0M986.1 387.2h0M986.6 393.8h0M987.1 387.2h0M987.6 387.2h0M988.1 387.2h0M988.7 393.8h0M989.2 393.8h0M989.7 390.5h0M990.2 390.5h0M990.7 383.8h0M991.3 390.5h0M991.8 390.5h0M992.3 390.5h0M992.8 390.5h0M993.3 390.5h0M993.9 387.2h0M994.4 387.2h0M994.9 383.8h0M995.4 393.8h0M995.9 390.5h0M996.5 387.2h0M997.0 390.5h0M997.5 390.5h0M998.0 387.2h0M998.5 393.8h0M999.1 387.2h0M999.6 390.5h0M1000.1 390.5h0M1000.6 393.8h0M1001.1 390.5h0M1001.7 387.2h0M1002.2 387.2h0M1002.7 383.8h0M1003.2 390.5h0M1003.7 383.8h0M1004.3 387.2h0M1004.8 383.8h0M1005.3 383.8h0M1005.8 383.8h0M1006.4 383.8h0M1006.9 383.8h0M1007.4 387.2h0M1007.9 390.5h0M1008.4 390.5h0M1009.0 387.2h0M1009.5 383.8h0M1010.0 383.8h0M1010.5 383.8h0M1011.0 390.5h0M1011.6 383.8h0M1012.1 383.8h0M1012.6 387.2h0M1013.1 387.2h0M1013.6 387.2h0M1014.2 387.2h0M1014.7 387.2h0M1015.2 390.5h0M1015.7 383.8h0M1016.2 387.2h0M1016.8 387.2h0M1017.3 380.5h0M1017.8 383.8h0M1018.3 387.2h0M1018.8 387.2h0M1019.4 387.2h0M1019.9 393.8h0M1020.4 383.8h0M1020.9 387.2h0M1021.4 390.5h0M1022.0 387.2h0M1022.5 387.2h0M1023.0 393.8h0" stroke="#c540b6" stroke-width="3.9" stroke-linecap="round"/>
<path d="M61.5 503.2 62.0 503.1 62.5 503.7 63.1 507.1 63.6 503.0 64.1 502.6 64.6 502.4 65.1 503.5 65.7 501.9 66.2 502.6 66.7 498.8 67.2 499.1 67.7 495.9 68.3 498.7 68.8 505.4 69.3 504.1 69.8 503.4 70.3 503.8 70.9 503.9 71.4 501.0 71.9 501.3 72.4 502.4 72.9 503.6 73.5 501.8 74.0 502.6 74.5 501.6 75.0 499.8 75.5 500.4 76.1 500.4 76.6 503.8 77.1 506.4 77.6 505.9 78.1 504.0 78.7 502.3 79.2 499.3 79.7 500.2 80.2 505.1 80.8 506.3 81.3 504.8 81.8 503.0 82.3 502.7 82.8 503.4 83.4 502.8 83.9 503.4 84.4 501.0 84.9 501.6 85.4 501.0 86.0 503.7 86.5 499.9 87.0 503.6 87.5 502.2 88.0 500.6 88.6 501.0 89.1 501.3 89.6 500.6 90.1 501.7 90.6 500.0 91.2 496.7 91.7 500.4 92.2 500.4 92.7 504.0 93.2 502.8 93.8 497.0 94.3 501.4 94.8 499.1 95.3 500.7 95.8 505.0 96.4 504.4 96.9 499.4 97.4 499.2 97.9 495.8 98.4 499.1 99.0 500.3 99.5 497.4 100.0 499.2 100.5 501.0 101.0 501.5 101.6 498.5 102.1 497.0 102.6 495.4 103.1 494.2 103.6 497.1 104.2 497.7 104.7 500.7 105.2 499.7 105.7 498.0 106.2 494.7 106.8 499.6 107.3 498.8 107.8 497.9 108.3 495.4 108.8 494.1 109.4 497.1 109.9 494.9 110.4 497.3 110.9 498.4 111.4 496.7 112.0 493.3 112.5 496.1 113.0 499.4 113.5 496.1 114.0 493.7 114.6 497.6 115.1 497.3 115.6 495.4 116.1 498.6 116.7 496.7 117.2 497.4 117.7 495.9 118.2 494.4 118.7 495.8 119.3 494.1 119.8 491.3 120.3 492.7 120.8 497.1 121.3 498.8 121.9 501.8 122.4 500.6 122.9 501.4 123.4 498.8 123.9 496.1 124.5 496.8 125.0 494.0 125.5 496.4 126.0 494.8 126.5 495.7 127.1 493.6 127.6 494.2 128.1 496.8 128.6 495.4 129.1 493.8 129.7 495.1 130.2 496.9 130.7 495.4 131.2 492.6 131.7 490.5 132.3 489.9 132.8 494.8 133.3 494.5 133.8 495.6 134.3 497.3 134.9 496.4 135.4 496.3 135.9 494.2 136.4 490.8 136.9 494.1 137.5 493.9 138.0 495.3 138.5 492.3 139.0 493.0 139.5 497.9 140.1 494.0 140.6 494.1 141.1 496.8 141.6 494.6 142.1 494.4 142.7 489.4 143.2 493.4 143.7 492.6 144.2 495.9 144.7 494.4 145.3 493.1 145.8 494.2 146.3 493.2 146.8 492.1 147.3 496.0 147.9 496.6 148.4 494.9 148.9 495.7 149.4 496.0 149.9 495.6 150.5 494.2 151.0 493.6 151.5 494.1 152.0 494.6 152.6 494.3 153.1 492.2 153.6 492.3 154.1 493.4 154.6 490.9 155.2 491.7 155.7 493.7 156.2 493.3 156.7 492.2 157.2 492.2 157.8 491.2 158.3 493.8 158.8 492.1 159.3 488.5 159.8 487.9 160.4 490.8 160.9 492.0 161.4 491.0 161.9 488.9 162.4 490.4 163.0 489.6 163.5 489.6 164.0 491.1 164.5 490.1 165.0 492.0 165.6 490.6 166.1 490.6 166.6 491.1 167.1 494.9 167.6 496.9 168.2 496.5 168.7 492.7 169.2 492.6 169.7 494.5 170.2 495.2 170.8 490.2 171.3 491.4 171.8 490.5 172.3 493.3 172.8 494.3 173.4 492.3 173.9 497.2 174.4 494.2 174.9 498.7 175.4 495.1 176.0 493.7 176.5 497.2 177.0 493.7 177.5 492.3 178.0 495.8 178.6 494.2 179.1 494.6 179.6 491.1 180.1 496.0 180.6 496.5 181.2 495.4 181.7 495.6 182.2 493.2 182.7 492.2 183.2 489.4 183.8 492.3 184.3 495.5 184.8 496.1 185.3 496.5 185.8 496.3 186.4 492.7 186.9 490.4 187.4 493.4 187.9 493.8 188.5 495.7 189.0 493.9 189.5 491.8 190.0 493.7 190.5 492.4 191.1 489.6 191.6 490.5 192.1 490.4 192.6 489.8 193.1 490.8 193.7 494.4 194.2 499.0 194.7 499.8 195.2 495.7 195.7 497.1 196.3 495.2 196.8 495.3 197.3 493.2 197.8 493.4 198.3 490.2 198.9 496.1 199.4 493.4 199.9 495.0 200.4 493.2 200.9 494.1 201.5 491.5 202.0 491.9 202.5 494.8 203.0 495.4 203.5 490.4 204.1 493.9 204.6 490.9 205.1 492.9 205.6 494.2 206.1 492.3 206.7 492.2 207.2 492.2 207.7 493.5 208.2 495.2 208.7 496.9 209.3 495.4 209.8 498.2 210.3 493.2 210.8 496.7 211.3 493.9 211.9 494.8 212.4 493.3 212.9 493.1 213.4 490.7 213.9 492.5 214.5 496.7 215.0 494.6 215.5 493.2 216.0 492.7 216.5 493.9 217.1 492.5 217.6 492.2 218.1 492.5 218.6 494.9 219.1 495.2 219.7 491.0 220.2 490.1 220.7 490.9 221.2 493.1 221.8 494.3 222.3 492.3 222.8 496.4 223.3 493.3 223.8 495.2 224.4 496.0 224.9 496.7 225.4 494.1 225.9 493.6 226.4 489.0 227.0 486.2 227.5 487.5 228.0 490.8 228.5 493.0 229.0 491.5 229.6 493.2 230.1 493.0 230.6 494.8 231.1 489.0 231.6 488.0 232.2 487.2 232.7 486.7 233.2 492.2 233.7 489.1 234.2 487.8 234.8 488.2 235.3 491.1 235.8 489.5 236.3 491.4 236.8 491.8 237.4 489.4 237.9 484.8 238.4 485.6 238.9 485.4 239.4 491.4 240.0 489.1 240.5 487.2 241.0 489.4 241.5 489.7 242.0 487.8 242.6 491.3 243.1 492.4 243.6 491.5 244.1 489.0 244.6 487.5 245.2 484.4 245.7 488.1 246.2 489.8 246.7 487.7 247.2 488.9 247.8 496.3 248.3 490.3 248.8 486.2 249.3 489.4 249.8 488.5 250.4 488.1 250.9 490.2 251.4 489.6 251.9 491.7 252.4 491.6 253.0 492.9 253.5 491.3 254.0 485.6 254.5 490.5 255.0 486.2 255.6 490.2 256.1 490.3 256.6 486.9 257.1 488.4 257.7 490.7 258.2 487.7 258.7 488.7 259.2 487.4 259.7 486.3 260.3 486.6 260.8 490.7 261.3 491.3 261.8 490.1 262.3 489.4 262.9 489.5 263.4 489.9 263.9 489.9 264.4 485.7 264.9 489.5 265.5 487.4 266.0 482.9 266.5 487.8 267.0 486.0 267.5 487.3 268.1 488.1 268.6 487.3 269.1 489.3 269.6 488.5 270.1 488.2 270.7 486.5 271.2 487.2 271.7 485.9 272.2 487.6 272.7 491.1 273.3 492.0 273.8 491.2 274.3 487.0 274.8 490.2 275.3 491.4 275.9 494.4 276.4 486.6 276.9 487.8 277.4 487.6 277.9 490.5 278.5 487.2 279.0 487.2 279.5 492.9 280.0 492.7 280.5 486.3 281.1 487.6 281.6 491.0 282.1 488.3 282.6 489.7 283.1 489.3 283.7 485.8 284.2 485.9 284.7 489.7 285.2 491.6 285.7 488.6 286.3 490.9 286.8 488.1 287.3 488.8 287.8 488.5 288.3 485.7 288.9 487.9 289.4 487.3 289.9 482.1 290.4 483.7 290.9 484.5 291.5 484.7 292.0 484.6 292.5 485.1 293.0 481.7 293.6 487.2 294.1 487.9 294.6 488.6 295.1 487.8 295.6 488.1 296.2 487.6 296.7 485.5 297.2 483.7 297.7 486.3 298.2 489.4 298.8 489.2 299.3 491.9 299.8 486.8 300.3 486.9 300.8 486.2 301.4 489.7 301.9 492.4 302.4 488.9 302.9 489.9 303.4 488.3 304.0 485.9 304.5 486.8 305.0 485.1 305.5 489.9 306.0 490.0 306.6 491.3 307.1 490.1 307.6 483.7 308.1 487.7 308.6 487.9 309.2 482.6 309.7 485.6 310.2 489.0 310.7 491.9 311.2 487.3 311.8 489.2 312.3 489.0 312.8 487.9 313.3 487.1 313.8 488.5 314.4 489.2 314.9 489.7 315.4 487.6 315.9 484.8 316.4 489.1 317.0 491.0 317.5 487.8 318.0 487.6 318.5 489.2 319.0 484.5 319.6 487.2 320.1 492.4 320.6 490.2 321.1 487.2 321.6 491.7 322.2 489.3 322.7 488.7 323.2 487.0 323.7 487.6 324.2 483.6 324.8 482.8 325.3 482.2 325.8 486.9 326.3 486.9 326.8 489.5 327.4 483.9 327.9 484.4 328.4 489.0 328.9 486.2 329.5 482.8 330.0 483.5 330.5 484.8 331.0 486.0 331.5 489.3 332.1 490.9 332.6 492.1 333.1 490.5 333.6 487.5 334.1 486.1 334.7 483.5 335.2 488.1 335.7 490.1 336.2 488.5 336.7 485.8 337.3 487.8 337.8 488.3 338.3 487.8 338.8 484.8 339.3 486.4 339.9 485.4 340.4 487.8 340.9 488.5 341.4 488.5 341.9 486.6 342.5 490.0 343.0 489.8 343.5 490.8 344.0 490.3 344.5 489.7 345.1 488.9 345.6 485.3 346.1 482.2 346.6 482.6 347.1 486.1 347.7 488.3 348.2 487.7 348.7 487.3 349.2 490.7 349.7 487.5 350.3 483.2 350.8 481.7 351.3 483.6 351.8 486.7 352.3 488.1 352.9 486.7 353.4 488.2 353.9 487.1 354.4 485.2 354.9 485.0 355.5 487.3 356.0 488.8 356.5 485.1 357.0 483.6 357.5 485.3 358.1 490.4 358.6 485.7 359.1 483.3 359.6 485.8 360.1 487.1 360.7 485.3 361.2 485.7 361.7 487.0 362.2 482.7 362.7 484.5 363.3 486.7 363.8 488.3 364.3 489.6 364.8 487.5 365.4 483.6 365.9 487.7 366.4 488.4 366.9 485.8 367.4 488.1 368.0 489.1 368.5 487.1 369.0 481.5 369.5 482.9 370.0 482.9 370.6 482.7 371.1 484.3 371.6 482.8 372.1 485.3 372.6 489.6 373.2 485.0 373.7 487.7 374.2 485.5 374.7 486.8 375.2 485.9 375.8 488.6 376.3 485.5 376.8 487.2 377.3 484.7 377.8 485.7 378.4 485.6 378.9 488.0 379.4 483.3 379.9 481.7 380.4 486.8 381.0 486.9 381.5 489.7 382.0 485.2 382.5 485.8 383.0 486.9 383.6 489.9 384.1 487.3 384.6 485.4 385.1 486.9 385.6 485.9 386.2 484.0 386.7 486.4 387.2 481.7 387.7 481.6 388.2 486.6 388.8 484.8 389.3 484.4 389.8 485.7 390.3 487.9 390.8 487.6 391.4 484.2 391.9 483.6 392.4 486.7 392.9 485.6 393.4 484.0 394.0 486.5 394.5 488.2 395.0 491.1 395.5 485.5 396.0 483.8 396.6 483.0 397.1 484.9 397.6 484.0 398.1 486.9 398.6 480.1 399.2 484.8 399.7 483.5 400.2 483.7 400.7 485.6 401.3 485.6 401.8 483.0 402.3 487.2 402.8 487.1 403.3 484.8 403.9 485.2 404.4 482.6 404.9 481.1 405.4 482.4 405.9 484.4 406.5 484.7 407.0 482.9 407.5 480.9 408.0 479.2 408.5 485.4 409.1 485.6 409.6 483.2 410.1 486.4 410.6 486.4 411.1 484.3 411.7 482.9 412.2 486.1 412.7 485.7 413.2 488.3 413.7 486.7 414.3 484.0 414.8 482.7 415.3 481.9 415.8 483.5 416.3 484.3 416.9 485.3 417.4 485.5 417.9 482.3 418.4 482.7 418.9 481.3 419.5 483.6 420.0 480.9 420.5 481.1 421.0 480.7 421.5 480.9 422.1 481.8 422.6 486.0 423.1 484.0 423.6 480.6 424.1 481.5 424.7 484.1 425.2 484.8 425.7 484.5 426.2 488.0 426.7 487.7 427.3 485.4 427.8 486.8 428.3 481.9 428.8 482.2 429.3 480.8 429.9 482.4 430.4 485.6 430.9 482.2 431.4 484.7 431.9 479.9 432.5 482.6 433.0 476.8 433.5 475.6 434.0 478.7 434.5 477.3 435.1 476.9 435.6 476.0 436.1 475.6 436.6 474.3 437.2 471.9 437.7 472.9 438.2 474.4 438.7 473.1 439.2 475.6 439.8 479.7 440.3 474.5 440.8 474.7 441.3 475.6 441.8 476.8 442.4 477.7 442.9 476.6 443.4 477.8 443.9 478.6 444.4 478.6 445.0 482.0 445.5 480.6 446.0 476.5 446.5 474.4 447.0 478.0 447.6 477.7 448.1 476.9 448.6 474.9 449.1 476.3 449.6 477.3 450.2 476.5 450.7 476.8 451.2 479.6 451.7 480.6 452.2 480.5 452.8 478.9 453.3 475.7 453.8 478.7 454.3 481.6 454.8 482.4 455.4 482.5 455.9 480.6 456.4 480.0 456.9 478.9 457.4 481.0 458.0 478.7 458.5 482.8 459.0 481.7 459.5 478.9 460.0 478.2 460.6 474.5 461.1 474.7 461.6 475.7 462.1 481.9 462.6 477.8 463.2 479.6 463.7 478.6 464.2 477.3 464.7 478.7 465.2 473.7 465.8 477.7 466.3 481.6 466.8 479.8 467.3 478.2 467.8 478.0 468.4 478.9 468.9 476.9 469.4 477.2 469.9 478.1 470.4 476.5 471.0 477.2 471.5 477.3 472.0 478.0 472.5 474.5 473.1 473.8 473.6 473.5 474.1 476.7 474.6 476.0 475.1 471.5 475.7 470.1 476.2 476.2 476.7 475.4 477.2 471.5 477.7 470.3 478.3 471.9 478.8 475.2 479.3 476.9 479.8 473.4 480.3 471.8 480.9 475.7 481.4 471.1 481.9 474.3 482.4 473.0 482.9 471.7 483.5 473.5 484.0 472.5 484.5 469.9 485.0 467.5 485.5 470.0 486.1 472.5 486.6 475.6 487.1 468.9 487.6 474.6 488.1 475.9 488.7 478.7 489.2 478.7 489.7 477.7 490.2 478.1 490.7 478.4 491.3 476.7 491.8 477.3 492.3 478.0 492.8 477.1 493.3 474.5 493.9 473.4 494.4 477.0 494.9 478.6 495.4 478.5 495.9 475.8 496.5 478.8 497.0 477.5 497.5 473.4 498.0 479.2 498.5 475.4 499.1 481.6 499.6 480.7 500.1 478.3 500.6 473.1 501.1 474.3 501.7 479.5 502.2 481.6 502.7 480.2 503.2 475.4 503.7 476.0 504.3 476.5 504.8 478.3 505.3 477.9 505.8 478.7 506.3 474.9 506.9 475.2 507.4 479.8 507.9 475.7 508.4 478.9 509.0 483.3 509.5 481.8 510.0 476.7 510.5 480.1 511.0 475.0 511.6 477.4 512.1 476.8 512.6 480.1 513.1 481.5 513.6 480.0 514.2 482.7 514.7 482.2 515.2 478.9 515.7 476.3 516.2 482.5 516.8 479.2 517.3 479.4 517.8 478.4 518.3 477.2 518.8 474.2 519.4 476.0 519.9 476.9 520.4 479.6 520.9 477.6 521.4 474.5 522.0 474.1 522.5 476.2 523.0 477.7 523.5 479.4 524.0 477.8 524.6 479.1 525.1 478.8 525.6 482.0 526.1 479.7 526.6 479.1 527.2 479.7 527.7 481.4 528.2 477.6 528.7 476.8 529.2 476.9 529.8 472.9 530.3 478.5 530.8 480.5 531.3 479.2 531.8 485.7 532.4 484.2 532.9 485.1 533.4 484.5 533.9 482.9 534.4 477.2 535.0 480.9 535.5 480.2 536.0 476.4 536.5 477.4 537.0 479.3 537.6 480.7 538.1 479.6 538.6 477.6 539.1 479.5 539.6 477.0 540.2 477.4 540.7 479.4 541.2 475.7 541.7 477.9 542.2 473.9 542.8 474.4 543.3 473.9 543.8 476.2 544.3 479.0 544.9 478.6 545.4 480.6 545.9 479.7 546.4 478.7 546.9 479.8 547.5 478.7 548.0 479.1 548.5 481.2 549.0 478.8 549.5 481.3 550.1 477.7 550.6 478.0 551.1 475.0 551.6 476.2 552.1 481.2 552.7 480.9 553.2 482.8 553.7 477.8 554.2 476.6 554.7 479.2 555.3 481.2 555.8 482.1 556.3 477.2 556.8 479.7 557.3 479.6 557.9 480.0 558.4 480.9 558.9 479.8 559.4 476.3 559.9 476.1 560.5 475.2 561.0 475.1 561.5 477.6 562.0 481.9 562.5 479.5 563.1 478.3 563.6 477.0 564.1 475.2 564.6 478.3 565.1 478.5 565.7 479.1 566.2 477.9 566.7 480.5 567.2 478.1 567.7 480.7 568.3 479.4 568.8 481.9 569.3 479.5 569.8 481.3 570.3 482.1 570.9 481.4 571.4 484.7 571.9 483.1 572.4 480.2 572.9 482.2 573.5 479.9 574.0 479.5 574.5 480.5 575.0 481.4 575.5 485.0 576.1 479.4 576.6 480.0 577.1 483.2 577.6 481.9 578.2 482.4 578.7 485.2 579.2 480.6 579.7 481.3 580.2 483.2 580.8 481.2 581.3 477.8 581.8 477.9 582.3 480.5 582.8 481.7 583.4 485.7 583.9 486.5 584.4 480.7 584.9 483.7 585.4 484.7 586.0 486.7 586.5 483.9 587.0 481.7 587.5 482.3 588.0 485.6 588.6 485.1 589.1 487.2 589.6 486.2 590.1 482.8 590.6 480.4 591.2 485.5 591.7 480.6 592.2 480.9 592.7 481.1 593.2 480.0 593.8 480.2 594.3 481.6 594.8 487.2 595.3 484.6 595.8 482.5 596.4 482.9 596.9 484.9 597.4 482.0 597.9 481.6 598.4 478.6 599.0 482.5 599.5 484.2 600.0 486.8 600.5 482.1 601.0 487.3 601.6 486.8 602.1 484.2 602.6 482.8 603.1 482.3 603.6 480.2 604.2 483.5 604.7 482.0 605.2 481.1 605.7 483.4 606.2 483.6 606.8 482.2 607.3 482.3 607.8 481.8 608.3 485.5 608.8 486.5 609.4 483.2 609.9 483.2 610.4 486.3 610.9 484.1 611.4 487.6 612.0 486.3 612.5 486.2 613.0 480.3 613.5 483.9 614.1 484.4 614.6 485.2 615.1 485.4 615.6 485.5 616.1 483.4 616.7 485.5 617.2 484.6 617.7 481.9 618.2 480.7 618.7 482.7 619.3 484.0 619.8 479.2 620.3 477.3 620.8 483.2 621.3 483.5 621.9 489.8 622.4 483.3 622.9 483.1 623.4 482.3 623.9 484.4 624.5 487.2 625.0 488.9 625.5 484.1 626.0 486.7 626.5 482.6 627.1 484.1 627.6 484.5 628.1 485.6 628.6 483.1 629.1 486.5 629.7 485.1 630.2 484.6 630.7 483.8 631.2 481.8 631.7 484.7 632.3 485.2 632.8 485.7 633.3 488.9 633.8 484.6 634.3 483.9 634.9 484.2 635.4 486.1 635.9 484.8 636.4 486.6 636.9 486.4 637.5 481.6 638.0 481.8 638.5 479.0 639.0 481.4 639.5 482.3 640.1 484.8 640.6 485.1 641.1 484.7 641.6 487.4 642.1 487.2 642.7 483.2 643.2 482.6 643.7 484.5 644.2 488.3 644.7 486.0 645.3 485.0 645.8 485.5 646.3 486.8 646.8 485.6 647.3 485.8 647.9 484.4 648.4 483.5 648.9 482.6 649.4 485.3 650.0 484.0 650.5 485.8 651.0 486.3 651.5 487.7 652.0 480.6 652.6 481.0 653.1 480.7 653.6 482.9 654.1 485.9 654.6 491.0 655.2 491.2 655.7 490.9 656.2 488.7 656.7 486.1 657.2 486.9 657.8 481.4 658.3 485.7 658.8 485.6 659.3 486.9 659.8 484.0 660.4 482.6 660.9 482.9 661.4 484.4 661.9 485.9 662.4 485.1 663.0 486.2 663.5 487.5 664.0 484.1 664.5 484.9 665.0 482.1 665.6 483.1 666.1 486.6 666.6 484.8 667.1 489.5 667.6 488.7 668.2 489.2 668.7 487.7 669.2 488.7 669.7 489.7 670.2 488.0 670.8 485.9 671.3 485.0 671.8 489.8 672.3 487.5 672.8 485.9 673.4 484.7 673.9 482.1 674.4 483.4 674.9 485.8 675.4 485.2 676.0 484.3 676.5 486.5 677.0 487.5 677.5 486.1 678.0 487.1 678.6 484.8 679.1 487.7 679.6 485.1 680.1 485.3 680.6 486.5 681.2 485.8 681.7 484.0 682.2 490.1 682.7 491.6 683.2 485.4 683.8 486.6 684.3 484.1 684.8 486.4 685.3 484.0 685.9 487.0 686.4 488.3 686.9 491.4 687.4 491.7 687.9 488.3 688.5 489.8 689.0 487.5 689.5 487.2 690.0 485.0 690.5 478.4 691.1 486.1 691.6 477.8 692.1 482.1 692.6 487.5 693.1 488.1 693.7 480.8 694.2 481.6 694.7 488.0 695.2 492.8 695.7 497.2 696.3 483.9 696.8 488.1 697.3 485.8 697.8 490.4 698.3 481.4 698.9 484.4 699.4 489.6 699.9 485.8 700.4 485.4 700.9 482.5 701.5 490.7 702.0 483.4 702.5 482.0 703.0 484.1 703.5 485.1 704.1 496.5 704.6 493.4 705.1 487.1 705.6 490.6 706.1 491.2 706.7 491.2 707.2 489.7 707.7 491.4 708.2 484.9 708.7 481.8 709.3 484.0 709.8 481.9 710.3 489.1 710.8 498.1 711.3 498.9 711.9 495.8 712.4 493.9 712.9 488.5 713.4 483.3 713.9 489.4 714.5 483.0 715.0 488.2 715.5 488.5 716.0 492.8 716.5 491.5 717.1 491.3 717.6 488.1 718.1 481.5 718.6 484.9 719.1 491.1 719.7 495.5 720.2 499.0 720.7 489.9 721.2 486.1 721.8 491.8 722.3 489.2 722.8 501.7 723.3 497.2 723.8 487.0 724.4 486.7 724.9 496.2 725.4 485.2 725.9 489.3 726.4 484.2 727.0 495.4 727.5 491.2 728.0 486.8 728.5 481.7 729.0 484.0 729.6 476.7 730.1 482.9 730.6 497.7 731.1 495.0 731.6 492.1 732.2 486.9 732.7 491.3 733.2 489.7 733.7 487.3 734.2 496.3 734.8 496.1 735.3 490.1 735.8 498.1 736.3 494.8 736.8 495.9 737.4 494.8 737.9 499.0 738.4 498.4 738.9 493.8 739.4 496.6 740.0 492.9 740.5 493.6 741.0 500.7 741.5 491.7 742.0 487.8 742.6 489.0 743.1 489.0 743.6 497.2 744.1 487.8 744.6 501.1 745.2 504.0 745.7 496.1 746.2 495.4 746.7 492.7 747.2 496.1 747.8 497.6 748.3 498.7 748.8 499.3 749.3 504.8 749.8 497.8 750.4 498.6 750.9 495.0 751.4 494.4 751.9 495.0 752.4 494.0 753.0 495.4 753.5 490.6 754.0 491.6 754.5 490.1 755.0 486.8 755.6 487.5 756.1 488.7 756.6 490.9 757.1 485.5 757.7 489.0 758.2 486.6 758.7 487.0 759.2 491.7 759.7 498.0 760.3 497.1 760.8 493.2 761.3 491.7 761.8 499.1 762.3 489.0 762.9 497.0 763.4 488.7 763.9 488.9 764.4 492.0 764.9 492.3 765.5 500.9 766.0 499.5 766.5 496.4 767.0 499.6 767.5 496.9 768.1 491.9 768.6 498.4 769.1 503.0 769.6 504.1 770.1 493.5 770.7 502.7 771.2 496.3 771.7 498.9 772.2 501.9 772.7 508.6 773.3 493.7 773.8 489.6 774.3 497.8 774.8 498.3 775.3 495.0 775.9 481.7 776.4 490.9 776.9 492.3 777.4 481.9 777.9 501.1 778.5 486.4 779.0 488.6 779.5 492.1 780.0 494.8 780.5 498.3 781.1 495.3 781.6 491.2 782.1 491.7 782.6 484.1 783.1 485.1 783.7 499.6 784.2 494.1 784.7 494.4 785.2 503.4 785.7 503.7 786.3 499.7 786.8 500.6 787.3 496.5 787.8 491.8 788.3 498.3 788.9 497.4 789.4 503.6 789.9 497.9 790.4 494.9 790.9 496.8 791.5 495.3 792.0 494.1 792.5 490.9 793.0 494.7 793.6 496.7 794.1 504.4 794.6 499.5 795.1 489.5 795.6 495.1 796.2 505.9 796.7 498.4 797.2 493.4 797.7 494.0 798.2 482.1 798.8 488.2 799.3 491.6 799.8 487.2 800.3 494.7 800.8 491.5 801.4 485.6 801.9 488.1 802.4 495.3 802.9 504.4 803.4 505.5 804.0 501.2 804.5 496.1 805.0 494.9 805.5 500.0 806.0 495.5 806.6 497.7 807.1 501.2 807.6 494.3 808.1 492.7 808.6 496.6 809.2 496.4 809.7 495.7 810.2 493.6 810.7 494.8 811.2 504.0 811.8 505.9 812.3 493.3 812.8 495.1 813.3 496.2 813.8 496.4 814.4 490.1 814.9 492.9 815.4 495.5 815.9 492.8 816.4 496.2 817.0 485.2 817.5 484.5 818.0 491.5 818.5 496.0 819.0 495.4 819.6 493.9 820.1 496.1 820.6 501.2 821.1 502.6 821.6 498.9 822.2 495.4 822.7 500.8 823.2 500.9 823.7 502.5 824.2 497.9 824.8 493.2 825.3 495.9 825.8 493.4 826.3 500.3 826.8 502.1 827.4 489.2 827.9 496.3 828.4 502.5 828.9 503.9 829.5 497.8 830.0 493.2 830.5 499.5 831.0 502.5 831.5 499.5 832.1 492.7 832.6 488.0 833.1 494.0 833.6 491.7 834.1 491.4 834.7 496.3 835.2 501.3 835.7 489.4 836.2 490.4 836.7 499.8 837.3 497.9 837.8 495.7 838.3 499.2 838.8 492.7 839.3 489.4 839.9 493.6 840.4 502.4 840.9 504.0 841.4 500.0 841.9 502.9 842.5 497.7 843.0 491.9 843.5 487.1 844.0 493.7 844.5 499.5 845.1 499.8 845.6 498.0 846.1 495.6 846.6 501.3 847.1 498.7 847.7 491.2 848.2 500.6 848.7 495.7 849.2 498.2 849.7 497.5 850.3 502.0 850.8 500.3 851.3 504.0 851.8 501.0 852.3 496.5 852.9 494.3 853.4 498.5 853.9 493.7 854.4 499.5 854.9 496.7 855.5 492.3 856.0 490.6 856.5 493.1 857.0 502.8 857.5 502.7 858.1 499.2 858.6 493.4 859.1 503.5 859.6 498.1 860.1 496.9 860.7 494.4 861.2 501.2 861.7 499.0 862.2 495.2 862.8 496.3 863.3 491.4 863.8 488.9 864.3 491.8 864.8 480.8 865.4 494.2 865.9 503.8 866.4 494.1 866.9 494.1 867.4 487.6 868.0 492.5 868.5 494.9 869.0 498.4 869.5 490.5 870.0 490.2 870.6 489.9 871.1 491.5 871.6 503.7 872.1 497.9 872.6 495.9 873.2 492.9 873.7 497.4 874.2 507.5 874.7 505.6 875.2 506.4 875.8 494.9 876.3 499.4 876.8 496.7 877.3 501.0 877.8 502.1 878.4 500.7 878.9 489.4 879.4 492.6 879.9 491.1 880.4 494.7 881.0 494.4 881.5 498.8 882.0 488.8 882.5 488.1 883.0 490.8 883.6 493.8 884.1 491.8 884.6 492.6 885.1 493.3 885.6 498.1 886.2 495.0 886.7 495.1 887.2 485.9 887.7 478.0 888.2 479.7 888.8 488.7 889.3 480.6 889.8 489.3 890.3 490.7 890.8 491.7 891.4 488.6 891.9 488.5 892.4 494.0 892.9 494.2 893.4 492.4 894.0 489.4 894.5 491.1 895.0 493.3 895.5 491.6 896.0 489.9 896.6 487.3 897.1 488.7 897.6 487.0 898.1 485.0 898.7 489.0 899.2 487.4 899.7 483.5 900.2 485.1 900.7 488.9 901.3 488.0 901.8 485.9 902.3 485.1 902.8 487.0 903.3 487.3 903.9 487.0 904.4 486.3 904.9 486.7 905.4 488.5 905.9 488.3 906.5 487.6 907.0 485.9 907.5 487.7 908.0 490.1 908.5 490.2 909.1 488.1 909.6 489.1 910.1 491.2 910.6 489.9 911.1 491.0 911.7 492.6 912.2 493.8 912.7 489.7 913.2 487.5 913.7 489.0 914.3 489.9 914.8 488.7 915.3 488.4 915.8 487.6 916.3 489.0 916.9 485.1 917.4 486.3 917.9 484.6 918.4 484.4 918.9 483.0 919.5 483.0 920.0 483.9 920.5 484.5 921.0 487.0 921.5 485.5 922.1 485.5 922.6 485.5 923.1 485.3 923.6 486.7 924.1 485.6 924.7 485.1 925.2 484.5 925.7 484.4 926.2 484.2 926.7 485.4 927.3 484.7 927.8 484.4 928.3 484.1 928.8 484.9 929.3 483.7 929.9 484.9 930.4 483.5 930.9 484.4 931.4 486.4 931.9 485.1 932.5 484.0 933.0 482.1 933.5 483.7 934.0 483.4 934.6 484.4 935.1 482.8 935.6 483.6 936.1 485.5 936.6 484.6 937.2 483.2 937.7 481.3 938.2 482.0 938.7 483.2 939.2 483.6 939.8 481.6 940.3 480.7 940.8 480.5 941.3 480.3 941.8 481.1 942.4 482.2 942.9 484.8 943.4 483.8 943.9 485.0 944.4 481.5 945.0 484.0 945.5 484.2 946.0 483.8 946.5 484.2 947.0 484.0 947.6 485.6 948.1 484.9 948.6 481.4 949.1 479.8 949.6 483.3 950.2 482.8 950.7 484.3 951.2 482.9 951.7 481.8 952.2 481.8 952.8 482.6 953.3 482.8 953.8 481.8 954.3 482.9 954.8 483.5 955.4 481.8 955.9 480.7 956.4 479.2 956.9 480.6 957.4 481.7 958.0 481.2 958.5 481.2 959.0 481.7 959.5 482.2 960.0 483.1 960.6 483.8 961.1 483.7 961.6 484.5 962.1 482.1 962.6 483.1 963.2 483.3 963.7 481.5 964.2 481.2 964.7 482.5 965.2 482.6 965.8 480.9 966.3 481.1 966.8 483.8 967.3 484.2 967.8 483.4 968.4 484.6 968.9 482.3 969.4 482.2 969.9 483.6 970.5 482.6 971.0 481.1 971.5 482.6 972.0 484.6 972.5 480.2 973.1 481.7 973.6 480.5 974.1 481.2 974.6 480.1 975.1 484.8 975.7 482.6 976.2 482.6 976.7 481.6 977.2 480.8 977.7 481.2 978.3 482.2 978.8 484.6 979.3 483.8 979.8 485.1 980.3 482.3 980.9 482.5 981.4 481.9 981.9 480.2 982.4 486.3 982.9 483.9 983.5 483.4 984.0 482.0 984.5 481.5 985.0 480.7 985.5 483.0 986.1 482.2 986.6 482.2 987.1 482.6 987.6 481.0 988.1 482.1 988.7 482.1 989.2 482.9 989.7 482.2 990.2 482.4 990.7 483.1 991.3 484.0 991.8 482.3 992.3 483.7 992.8 481.8 993.3 481.9 993.9 482.4 994.4 482.6 994.9 479.4 995.4 479.8 995.9 481.1 996.5 483.0 997.0 481.8 997.5 484.1 998.0 480.9 998.5 481.9 999.1 482.9 999.6 482.7 1000.1 482.9 1000.6 483.9 1001.1 482.1 1001.7 483.1 1002.2 484.1 1002.7 482.9 1003.2 479.7 1003.7 479.7 1004.3 480.2 1004.8 480.1 1005.3 482.0 1005.8 481.2 1006.4 485.1 1006.9 484.4 1007.4 481.7 1007.9 481.8 1008.4 484.1 1009.0 484.1 1009.5 481.9 1010.0 483.6 1010.5 482.4 1011.0 485.3 1011.6 483.0 1012.1 483.5 1012.6 483.7 1013.1 482.5 1013.6 482.3 1014.2 483.9 1014.7 483.8 1015.2 483.0 1015.7 483.3 1016.2 485.1 1016.8 484.9 1017.3 484.2 1017.8 483.7 1018.3 481.0 1018.8 482.0 1019.4 481.7 1019.9 483.1 1020.4 482.0 1020.9 482.8 1021.4 481.3 1022.0 483.1 1022.5 481.8 1023.0 482.2" stroke="#3ba957" stroke-width="1"/>
<path d="M61.5 508 100 505 122 501.7 172 495.8 222 492 300 488 410 482.5 570 479 750 477.5 920 476 1023 474.5" stroke="#16a59c" stroke-width="1.2"/>
<path d="M61.5 510.8L61.5 510.8L62.0 436.2L62.5 436.2L63.1 510.8L64.1 510.8L64.6 436.2L65.1 436.2L65.7 436.2L66.2 436.2L66.7 436.2L67.2 510.8L70.3 510.8L70.9 436.2L71.4 510.8L71.9 436.2L72.4 436.2L72.9 436.2L73.5 436.2L74.0 510.8L79.2 510.8L79.7 436.2L80.2 510.8L80.8 510.8L81.3 436.2L81.8 510.8L87.5 510.8L88.0 436.2L88.6 436.2L89.1 436.2L89.6 436.2L90.1 510.8L90.6 510.8L91.2 436.2L91.7 436.2L92.2 510.8L97.4 510.8L97.9 436.2L98.4 436.2L99.0 436.2L99.5 510.8L100.0 436.2L100.5 436.2L101.0 510.8L101.6 436.2L102.1 510.8L102.6 436.2L103.1 510.8L104.2 510.8L104.7 436.2L105.2 510.8L105.7 436.2L106.2 436.2L106.8 436.2L107.3 436.2L107.8 436.2L108.3 510.8L108.8 361.5L109.4 510.8L109.9 436.2L110.4 436.2L110.9 510.8L111.4 436.2L112.0 510.8L114.0 510.8L114.6 436.2L115.1 436.2L115.6 436.2L116.1 436.2L116.7 510.8L118.2 510.8L118.7 436.2L119.3 361.5L119.8 510.8L121.3 510.8L121.9 436.2L122.4 436.2L122.9 436.2L123.4 510.8L124.5 510.8L125.0 436.2L125.5 436.2L126.0 510.8L126.5 436.2L127.1 436.2L127.6 510.8L128.1 436.2L128.6 510.8L130.2 510.8L130.7 436.2L131.2 510.8L132.8 510.8L133.3 436.2L133.8 436.2L134.3 510.8L134.9 436.2L135.4 436.2L135.9 436.2L136.4 510.8L138.5 510.8L139.0 436.2L139.5 510.8L142.7 510.8L143.2 436.2L143.7 510.8L145.3 510.8L145.8 436.2L146.3 436.2L146.8 436.2L147.3 510.8L148.9 510.8L149.4 436.2L149.9 436.2L150.5 436.2L151.0 510.8L151.5 436.2L152.0 361.5L152.6 510.8L153.1 510.8L153.6 436.2L154.1 510.8L155.2 510.8L155.7 436.2L156.2 436.2L156.7 510.8L157.2 436.2L157.8 510.8L159.8 510.8L160.4 436.2L160.9 436.2L161.4 510.8L162.4 510.8L163.0 436.2L163.5 436.2L164.0 436.2L164.5 510.8L170.8 510.8L171.3 436.2L171.8 510.8L174.9 510.8L175.4 436.2L176.0 436.2L176.5 361.5L177.0 510.8L177.5 436.2L178.0 436.2L178.6 436.2L179.1 510.8L181.2 510.8L181.7 436.2L182.2 436.2L182.7 510.8L184.3 510.8L184.8 436.2L185.3 436.2L185.8 510.8L186.4 510.8L186.9 436.2L187.4 436.2L187.9 510.8L188.5 510.8L189.0 436.2L189.5 510.8L191.6 510.8L192.1 436.2L192.6 436.2L193.1 510.8L193.7 510.8L194.2 436.2L194.7 510.8L195.2 510.8L195.7 436.2L196.3 436.2L196.8 510.8L198.3 510.8L198.9 436.2L199.4 510.8L199.9 436.2L200.4 436.2L200.9 436.2L201.5 436.2L202.0 436.2L202.5 510.8L204.1 510.8L204.6 436.2L205.1 510.8L206.7 510.8L207.2 436.2L207.7 510.8L208.2 436.2L208.7 510.8L212.4 510.8L212.9 436.2L213.4 436.2L213.9 510.8L214.5 436.2L215.0 436.2L215.5 436.2L216.0 510.8L216.5 436.2L217.1 436.2L217.6 510.8L218.1 436.2L218.6 510.8L219.1 436.2L219.7 436.2L220.2 436.2L220.7 510.8L221.2 510.8L221.8 436.2L222.3 510.8L224.4 510.8L224.9 436.2L225.4 510.8L225.9 436.2L226.4 436.2L227.0 510.8L230.1 510.8L230.6 436.2L231.1 436.2L231.6 436.2L232.2 510.8L233.2 510.8L233.7 436.2L234.2 510.8L234.8 436.2L235.3 510.8L236.8 510.8L237.4 436.2L237.9 510.8L239.4 510.8L240.0 436.2L240.5 436.2L241.0 436.2L241.5 436.2L242.0 510.8L242.6 510.8L243.1 436.2L243.6 436.2L244.1 510.8L244.6 436.2L245.2 436.2L245.7 510.8L246.2 510.8L246.7 436.2L247.2 436.2L247.8 436.2L248.3 510.8L248.8 436.2L249.3 510.8L250.4 510.8L250.9 436.2L251.4 436.2L251.9 436.2L252.4 436.2L253.0 436.2L253.5 436.2L254.0 510.8L254.5 510.8L255.0 436.2L255.6 436.2L256.1 510.8L256.6 436.2L257.1 510.8L257.7 510.8L258.2 436.2L258.7 510.8L259.2 510.8L259.7 436.2L260.3 436.2L260.8 436.2L261.3 436.2L261.8 510.8L262.3 510.8L262.9 436.2L263.4 436.2L263.9 510.8L264.9 510.8L265.5 436.2L266.0 436.2L266.5 510.8L267.0 436.2L267.5 436.2L268.1 510.8L268.6 436.2L269.1 436.2L269.6 436.2L270.1 436.2L270.7 510.8L271.2 436.2L271.7 510.8L272.7 510.8L273.3 361.5L273.8 510.8L280.5 510.8L281.1 436.2L281.6 436.2L282.1 436.2L282.6 510.8L283.1 510.8L283.7 436.2L284.2 510.8L284.7 436.2L285.2 436.2L285.7 436.2L286.3 436.2L286.8 510.8L287.3 436.2L287.8 436.2L288.3 510.8L289.4 510.8L289.9 436.2L290.4 436.2L290.9 510.8L291.5 436.2L292.0 436.2L292.5 436.2L293.0 436.2L293.6 436.2L294.1 436.2L294.6 510.8L295.1 436.2L295.6 436.2L296.2 510.8L296.7 436.2L297.2 510.8L297.7 436.2L298.2 436.2L298.8 436.2L299.3 436.2L299.8 436.2L300.3 510.8L300.8 436.2L301.4 436.2L301.9 436.2L302.4 436.2L302.9 436.2L303.4 510.8L304.0 436.2L304.5 436.2L305.0 436.2L305.5 436.2L306.0 510.8L306.6 436.2L307.1 510.8L307.6 436.2L308.1 510.8L308.6 436.2L309.2 436.2L309.7 436.2L310.2 436.2L310.7 436.2L311.2 510.8L311.8 436.2L312.3 510.8L312.8 436.2L313.3 436.2L313.8 436.2L314.4 510.8L314.9 510.8L315.4 436.2L315.9 436.2L316.4 436.2L317.0 436.2L317.5 436.2L318.0 436.2L318.5 510.8L319.0 436.2L319.6 510.8L320.1 436.2L320.6 436.2L321.1 436.2L321.6 436.2L322.2 510.8L322.7 510.8L323.2 436.2L323.7 510.8L324.2 510.8L324.8 436.2L325.3 436.2L325.8 436.2L326.3 436.2L326.8 436.2L327.4 436.2L327.9 510.8L328.4 436.2L328.9 436.2L329.5 436.2L330.0 510.8L330.5 510.8L331.0 436.2L331.5 436.2L332.1 436.2L332.6 436.2L333.1 436.2L333.6 436.2L334.1 510.8L337.3 510.8L337.8 436.2L338.3 436.2L338.8 510.8L340.4 510.8L340.9 436.2L341.4 436.2L341.9 436.2L342.5 436.2L343.0 436.2L343.5 436.2L344.0 510.8L345.1 510.8L345.6 436.2L346.1 436.2L346.6 436.2L347.1 510.8L347.7 436.2L348.2 436.2L348.7 436.2L349.2 436.2L349.7 436.2L350.3 436.2L350.8 436.2L351.3 510.8L351.8 436.2L352.3 436.2L352.9 436.2L353.4 510.8L353.9 436.2L354.4 436.2L354.9 436.2L355.5 436.2L356.0 510.8L356.5 436.2L357.0 436.2L357.5 436.2L358.1 510.8L362.2 510.8L362.7 436.2L363.3 436.2L363.8 436.2L364.3 436.2L364.8 436.2L365.4 510.8L365.9 510.8L366.4 436.2L366.9 436.2L367.4 436.2L368.0 510.8L368.5 510.8L369.0 436.2L369.5 436.2L370.0 436.2L370.6 436.2L371.1 436.2L371.6 510.8L372.1 436.2L372.6 436.2L373.2 436.2L373.7 436.2L374.2 436.2L374.7 436.2L375.2 436.2L375.8 510.8L376.8 510.8L377.3 436.2L377.8 510.8L378.4 436.2L378.9 510.8L379.4 436.2L379.9 510.8L380.4 436.2L381.0 436.2L381.5 436.2L382.0 436.2L382.5 436.2L383.0 436.2L383.6 510.8L384.1 436.2L384.6 510.8L386.2 510.8L386.7 436.2L387.2 510.8L387.7 436.2L388.2 510.8L389.8 510.8L390.3 436.2L390.8 510.8L391.9 510.8L392.4 436.2L392.9 510.8L394.5 510.8L395.0 436.2L395.5 436.2L396.0 510.8L397.6 510.8L398.1 436.2L398.6 436.2L399.2 436.2L399.7 436.2L400.2 510.8L400.7 361.5L401.3 510.8L401.8 436.2L402.3 436.2L402.8 510.8L403.3 510.8L403.9 436.2L404.4 436.2L404.9 436.2L405.4 510.8L406.5 510.8L407.0 436.2L407.5 436.2L408.0 510.8L408.5 436.2L409.1 510.8L410.6 510.8L411.1 436.2L411.7 436.2L412.2 436.2L412.7 436.2L413.2 510.8L413.7 510.8L414.3 436.2L414.8 510.8L415.3 510.8L415.8 436.2L416.3 510.8L416.9 436.2L417.4 436.2L417.9 436.2L418.4 510.8L418.9 436.2L419.5 436.2L420.0 510.8L420.5 436.2L421.0 436.2L421.5 436.2L422.1 436.2L422.6 361.5L423.1 436.2L423.6 510.8L424.1 436.2L424.7 436.2L425.2 510.8L425.7 436.2L426.2 436.2L426.7 510.8L427.3 436.2L427.8 436.2L428.3 436.2L428.8 436.2L429.3 510.8L429.9 510.8L430.4 436.2L430.9 436.2L431.4 436.2L431.9 436.2L432.5 436.2L433.0 510.8L433.5 436.2L434.0 436.2L434.5 436.2L435.1 436.2L435.6 436.2L436.1 436.2L436.6 436.2L437.2 436.2L437.7 436.2L438.2 510.8L439.8 510.8L440.3 436.2L440.8 436.2L441.3 510.8L441.8 510.8L442.4 436.2L442.9 436.2L443.4 436.2L443.9 436.2L444.4 510.8L446.0 510.8L446.5 436.2L447.0 436.2L447.6 436.2L448.1 436.2L448.6 436.2L449.1 510.8L449.6 436.2L450.2 510.8L450.7 436.2L451.2 436.2L451.7 510.8L452.2 510.8L452.8 436.2L453.3 510.8L453.8 436.2L454.3 510.8L454.8 436.2L455.4 436.2L455.9 510.8L456.4 436.2L456.9 510.8L457.4 436.2L458.0 436.2L458.5 436.2L459.0 436.2L459.5 436.2L460.0 436.2L460.6 510.8L461.1 436.2L461.6 510.8L462.1 510.8L462.6 436.2L463.2 361.5L463.7 510.8L464.7 510.8L465.2 436.2L465.8 436.2L466.3 436.2L466.8 361.5L467.3 436.2L467.8 436.2L468.4 510.8L469.4 510.8L469.9 436.2L470.4 510.8L471.5 510.8L472.0 436.2L472.5 510.8L473.1 436.2L473.6 510.8L474.1 510.8L474.6 436.2L475.1 436.2L475.7 510.8L476.2 436.2L476.7 436.2L477.2 436.2L477.7 510.8L478.3 436.2L478.8 436.2L479.3 436.2L479.8 510.8L480.3 436.2L480.9 436.2L481.4 436.2L481.9 436.2L482.4 436.2L482.9 436.2L483.5 436.2L484.0 510.8L484.5 436.2L485.0 510.8L485.5 510.8L486.1 436.2L486.6 436.2L487.1 436.2L487.6 510.8L488.1 510.8L488.7 436.2L489.2 436.2L489.7 436.2L490.2 510.8L490.7 436.2L491.3 510.8L491.8 510.8L492.3 436.2L492.8 510.8L493.3 510.8L493.9 436.2L494.4 510.8L495.4 510.8L495.9 436.2L496.5 510.8L497.0 436.2L497.5 510.8L498.0 510.8L498.5 436.2L499.1 510.8L502.2 510.8L502.7 436.2L503.2 436.2L503.7 436.2L504.3 436.2L504.8 436.2L505.3 510.8L508.4 510.8L509.0 436.2L509.5 436.2L510.0 510.8L510.5 436.2L511.0 436.2L511.6 436.2L512.1 436.2L512.6 510.8L513.1 436.2L513.6 510.8L514.7 510.8L515.2 436.2L515.7 510.8L516.2 436.2L516.8 436.2L517.3 510.8L518.3 510.8L518.8 436.2L519.4 436.2L519.9 436.2L520.4 436.2L520.9 510.8L521.4 436.2L522.0 510.8L522.5 510.8L523.0 436.2L523.5 510.8L524.0 436.2L524.6 436.2L525.1 436.2L525.6 510.8L527.2 510.8L527.7 436.2L528.2 436.2L528.7 436.2L529.2 510.8L529.8 510.8L530.3 436.2L530.8 436.2L531.3 436.2L531.8 436.2L532.4 436.2L532.9 361.5L533.4 436.2L533.9 510.8L534.4 436.2L535.0 510.8L535.5 510.8L536.0 436.2L536.5 436.2L537.0 510.8L537.6 510.8L538.1 436.2L538.6 510.8L539.1 436.2L539.6 510.8L540.2 436.2L540.7 361.5L541.2 436.2L541.7 436.2L542.2 510.8L542.8 510.8L543.3 436.2L543.8 510.8L545.4 510.8L545.9 436.2L546.4 436.2L546.9 510.8L548.0 510.8L548.5 436.2L549.0 436.2L549.5 436.2L550.1 436.2L550.6 436.2L551.1 436.2L551.6 436.2L552.1 436.2L552.7 510.8L553.2 436.2L553.7 436.2L554.2 436.2L554.7 436.2L555.3 510.8L555.8 510.8L556.3 436.2L556.8 361.5L557.3 510.8L558.9 510.8L559.4 436.2L559.9 436.2L560.5 436.2L561.0 436.2L561.5 436.2L562.0 436.2L562.5 436.2L563.1 361.5L563.6 436.2L564.1 436.2L564.6 436.2L565.1 436.2L565.7 436.2L566.2 436.2L566.7 510.8L567.2 510.8L567.7 436.2L568.3 510.8L570.3 510.8L570.9 436.2L571.4 510.8L574.5 510.8L575.0 436.2L575.5 510.8L580.2 510.8L580.8 436.2L581.3 510.8L584.9 510.8L585.4 436.2L586.0 510.8L586.5 436.2L587.0 510.8L595.3 510.8L595.8 436.2L596.4 510.8L596.9 436.2L597.4 510.8L607.3 510.8L607.8 436.2L608.3 510.8L615.1 510.8L615.6 436.2L616.1 510.8L628.1 510.8L628.6 436.2L629.1 510.8L635.4 510.8L635.9 436.2L636.4 510.8L642.7 510.8L643.2 436.2L643.7 510.8L646.8 510.8L647.3 436.2L647.9 510.8L648.4 436.2L648.9 510.8L660.4 510.8L660.9 436.2L661.4 510.8L669.2 510.8L669.7 436.2L670.2 510.8L678.6 510.8L679.1 436.2L679.6 510.8L684.8 510.8L685.3 436.2L685.9 510.8L686.4 510.8L686.9 436.2L687.4 510.8L690.5 510.8L691.1 436.2L691.6 510.8L720.2 510.8L720.7 436.2L721.2 510.8L749.3 510.8L749.8 436.2L750.4 510.8L754.0 510.8L754.5 436.2L755.0 510.8L758.2 510.8L758.7 436.2L759.2 510.8L767.5 510.8L768.1 436.2L768.6 510.8L777.9 510.8L778.5 436.2L779.0 510.8L794.6 510.8L795.1 436.2L795.6 510.8L796.2 510.8L796.7 436.2L797.2 510.8L798.8 510.8L799.3 436.2L799.8 510.8L800.3 436.2L800.8 510.8L817.0 510.8L817.5 436.2L818.0 510.8L828.9 510.8L829.5 436.2L830.0 510.8L846.1 510.8L846.6 436.2L847.1 510.8L851.3 510.8L851.8 436.2L852.3 510.8L871.6 510.8L872.1 436.2L872.6 510.8L881.0 510.8L881.5 436.2L882.0 510.8L884.6 510.8L885.1 436.2L885.6 510.8L895.5 510.8L896.0 436.2L896.6 510.8L916.3 510.8L916.9 436.2L917.4 510.8L920.5 510.8L921.0 436.2L921.5 510.8L924.7 510.8L925.2 436.2L925.7 510.8L930.4 510.8L930.9 436.2L931.4 510.8L931.9 510.8L932.5 436.2L933.0 510.8L933.5 510.8L934.0 436.2L934.6 510.8L950.2 510.8L950.7 436.2L951.2 510.8L951.7 510.8L952.2 436.2L952.8 510.8L958.0 510.8L958.5 436.2L959.0 510.8L959.5 510.8L960.0 436.2L960.6 510.8L966.3 510.8L966.8 436.2L967.3 436.2L967.8 510.8L968.4 510.8L968.9 436.2L969.4 510.8L969.9 436.2L970.5 510.8L974.6 510.8L975.1 436.2L975.7 510.8L977.7 510.8L978.3 436.2L978.8 510.8L979.3 510.8L979.8 436.2L980.3 510.8L981.9 510.8L982.4 436.2L982.9 510.8L989.7 510.8L990.2 436.2L990.7 510.8L992.8 510.8L993.3 436.2L993.9 510.8L995.4 510.8L995.9 436.2L996.5 510.8L1001.1 510.8L1001.7 436.2L1002.2 510.8L1003.7 510.8L1004.3 436.2L1004.8 510.8L1005.3 510.8L1005.8 436.2L1006.4 510.8L1012.1 510.8L1012.6 436.2L1013.1 510.8L1014.7 510.8L1015.2 436.2L1015.7 510.8L1018.3 510.8L1018.8 436.2L1019.4 510.8L1020.4 510.8L1020.9 436.2L1021.4 510.8L1022.0 510.8L1022.5 436.2L1023.0 510.8L1023.0 510.8" stroke="#4a4af2" stroke-width="1" stroke-linejoin="bevel"/>
<path d="M61.5 510.8L87.0 510.8L87.5 436.2L88.0 510.8L318.0 510.8L318.5 436.2L319.0 510.8L365.9 510.8L366.4 436.2L366.9 510.8L411.7 510.8L412.2 436.2L412.7 510.8L417.9 510.8L418.4 436.2L418.9 510.8L423.6 510.8L424.1 436.2L424.7 510.8L447.0 510.8L447.6 436.2L448.1 510.8L458.5 510.8L459.0 436.2L459.5 510.8L487.6 510.8L488.1 436.2L488.7 510.8L541.2 510.8L541.7 436.2L542.2 510.8L545.4 510.8L545.9 436.2L546.4 510.8L590.6 510.8L591.2 436.2L591.7 510.8L687.9 510.8L688.5 436.2L689.0 510.8L830.5 510.8L831.0 436.2L831.5 510.8L986.6 510.8L987.1 436.2L987.6 510.8L998.5 510.8L999.1 436.2L999.6 510.8L1023.0 510.8" stroke="#e2262d" stroke-width="1.6" stroke-opacity="0.5" stroke-linejoin="miter"/>
<path d="M61.5 510.8L87.0 510.8L87.5 436.2L88.0 510.8L123.4 510.8L123.9 436.2L124.5 510.8L279.0 510.8L279.5 436.2L280.0 510.8L290.4 510.8L290.9 436.2L291.5 510.8L305.5 510.8L306.0 436.2L306.6 510.8L318.0 510.8L318.5 436.2L319.0 510.8L321.1 510.8L321.6 436.2L322.2 510.8L324.2 510.8L324.8 436.2L325.3 510.8L333.1 510.8L333.6 436.2L334.1 510.8L344.0 510.8L344.5 436.2L345.1 510.8L365.9 510.8L366.4 436.2L366.9 510.8L380.4 510.8L381.0 436.2L381.5 510.8L387.7 510.8L388.2 436.2L388.8 510.8L390.3 510.8L390.8 436.2L391.4 510.8L394.5 510.8L395.0 436.2L395.5 510.8L396.0 510.8L396.6 436.2L397.1 510.8L411.7 510.8L412.2 436.2L412.7 510.8L417.9 510.8L418.4 436.2L418.9 510.8L423.6 510.8L424.1 436.2L424.7 510.8L429.3 510.8L429.9 436.2L430.4 510.8L447.0 510.8L447.6 436.2L448.1 510.8L451.2 510.8L451.7 436.2L452.2 510.8L458.5 510.8L459.0 436.2L459.5 510.8L463.2 510.8L463.7 436.2L464.2 510.8L480.3 510.8L480.9 436.2L481.4 510.8L487.6 510.8L488.1 436.2L488.7 510.8L493.9 510.8L494.4 436.2L494.9 510.8L507.9 510.8L508.4 436.2L509.0 510.8L523.0 510.8L523.5 436.2L524.0 510.8L529.8 510.8L530.3 436.2L530.8 510.8L541.2 510.8L541.7 436.2L542.2 510.8L545.4 510.8L545.9 436.2L546.4 510.8L559.9 510.8L560.5 436.2L561.0 510.8L564.1 510.8L564.6 436.2L565.1 510.8L567.7 510.8L568.3 436.2L568.8 510.8L590.6 510.8L591.2 436.2L591.7 510.8L592.7 510.8L593.2 436.2L593.8 510.8L597.9 510.8L598.4 436.2L599.0 510.8L602.1 510.8L602.6 436.2L603.1 510.8L605.2 510.8L605.7 436.2L606.2 510.8L644.2 510.8L644.7 436.2L645.3 510.8L654.6 510.8L655.2 436.2L655.7 510.8L667.6 510.8L668.2 436.2L668.7 510.8L675.4 510.8L676.0 436.2L676.5 510.8L687.9 510.8L688.5 436.2L689.0 510.8L699.4 510.8L699.9 436.2L700.4 510.8L730.6 510.8L731.1 436.2L731.6 510.8L736.3 510.8L736.8 436.2L737.4 510.8L781.6 510.8L782.1 436.2L782.6 510.8L824.2 510.8L824.8 436.2L825.3 510.8L826.8 510.8L827.4 436.2L827.9 510.8L830.5 510.8L831.0 436.2L831.5 510.8L834.7 510.8L835.2 436.2L835.7 510.8L839.9 510.8L840.4 436.2L840.9 510.8L876.8 510.8L877.3 436.2L877.8 510.8L888.2 510.8L888.8 436.2L889.3 510.8L909.6 510.8L910.1 436.2L910.6 510.8L936.6 510.8L937.2 436.2L937.7 510.8L943.4 510.8L943.9 436.2L944.4 510.8L962.6 510.8L963.2 436.2L963.7 510.8L986.6 510.8L987.1 436.2L987.6 510.8L998.5 510.8L999.1 436.2L999.6 510.8L1007.9 510.8L1008.4 436.2L1009.0 510.8L1023.0 510.8" stroke="#f5771f" stroke-width="1.3" stroke-linejoin="bevel"/>
<path d="M61.5 510.8L87.0 510.8L87.5 504.1L88.0 510.8L123.4 510.8L123.9 504.1L124.5 510.8L279.0 510.8L279.5 504.1L280.0 510.8L290.4 510.8L290.9 504.1L291.5 510.8L305.5 510.8L306.0 504.1L306.6 510.8L318.0 510.8L318.5 504.1L319.0 510.8L321.1 510.8L321.6 504.1L322.2 510.8L324.2 510.8L324.8 504.1L325.3 510.8L333.1 510.8L333.6 504.1L334.1 510.8L344.0 510.8L344.5 504.1L345.1 510.8L365.9 510.8L366.4 504.1L366.9 510.8L380.4 510.8L381.0 504.1L381.5 510.8L387.7 510.8L388.2 504.1L388.8 510.8L390.3 510.8L390.8 504.1L391.4 510.8L394.5 510.8L395.0 504.1L395.5 510.8L396.0 510.8L396.6 504.1L397.1 510.8L411.7 510.8L412.2 504.1L412.7 510.8L417.9 510.8L418.4 504.1L418.9 510.8L423.6 510.8L424.1 504.1L424.7 510.8L429.3 510.8L429.9 504.1L430.4 510.8L447.0 510.8L447.6 504.1L448.1 510.8L451.2 510.8L451.7 504.1L452.2 510.8L458.5 510.8L459.0 504.1L459.5 510.8L463.2 510.8L463.7 504.1L464.2 510.8L480.3 510.8L480.9 504.1L481.4 510.8L487.6 510.8L488.1 504.1L488.7 510.8L493.9 510.8L494.4 504.1L494.9 510.8L507.9 510.8L508.4 504.1L509.0 510.8L523.0 510.8L523.5 504.1L524.0 510.8L529.8 510.8L530.3 504.1L530.8 510.8L541.2 510.8L541.7 504.1L542.2 510.8L545.4 510.8L545.9 504.1L546.4 510.8L559.9 510.8L560.5 504.1L561.0 510.8L564.1 510.8L564.6 504.1L565.1 510.8L567.7 510.8L568.3 504.1L568.8 510.8L590.6 510.8L591.2 504.1L591.7 510.8L592.7 510.8L593.2 504.1L593.8 510.8L597.9 510.8L598.4 504.1L599.0 510.8L602.1 510.8L602.6 504.1L603.1 510.8L605.2 510.8L605.7 504.1L606.2 510.8L644.2 510.8L644.7 504.1L645.3 510.8L654.6 510.8L655.2 504.1L655.7 510.8L667.6 510.8L668.2 504.1L668.7 510.8L675.4 510.8L676.0 504.1L676.5 510.8L687.9 510.8L688.5 504.1L689.0 510.8L699.4 510.8L699.9 504.1L700.4 510.8L730.6 510.8L731.1 504.1L731.6 510.8L736.3 510.8L736.8 504.1L737.4 510.8L781.6 510.8L782.1 504.1L782.6 510.8L824.2 510.8L824.8 504.1L825.3 510.8L826.8 510.8L827.4 504.1L827.9 510.8L830.5 510.8L831.0 504.1L831.5 510.8L834.7 510.8L835.2 504.1L835.7 510.8L839.9 510.8L840.4 504.1L840.9 510.8L876.8 510.8L877.3 504.1L877.8 510.8L888.2 510.8L888.8 504.1L889.3 510.8L909.6 510.8L910.1 504.1L910.6 510.8L936.6 510.8L937.2 504.1L937.7 510.8L943.4 510.8L943.9 504.1L944.4 510.8L962.6 510.8L963.2 504.1L963.7 510.8L986.6 510.8L987.1 504.1L987.6 510.8L998.5 510.8L999.1 504.1L999.6 510.8L1007.9 510.8L1008.4 504.1L1009.0 510.8L1023.0 510.8" stroke="#4a9aea" stroke-width="1.6" stroke-linejoin="miter"/>
</g>
<path d="M61.5 509.8H1023" stroke="#f5771f" stroke-width="1.4"/>
<g fill="#f5771f"><circle cx="123.9" cy="436.2" r="1.9"/><circle cx="279.5" cy="436.2" r="1.9"/><circle cx="290.9" cy="436.2" r="1.9"/><circle cx="306.0" cy="436.2" r="1.9"/><circle cx="321.6" cy="436.2" r="1.9"/><circle cx="324.8" cy="436.2" r="1.9"/><circle cx="333.6" cy="436.2" r="1.9"/><circle cx="344.5" cy="436.2" r="1.9"/><circle cx="381.0" cy="436.2" r="1.9"/><circle cx="388.2" cy="436.2" r="1.9"/><circle cx="390.8" cy="436.2" r="1.9"/><circle cx="395.0" cy="436.2" r="1.9"/><circle cx="396.6" cy="436.2" r="1.9"/><circle cx="429.9" cy="436.2" r="1.9"/><circle cx="451.7" cy="436.2" r="1.9"/><circle cx="463.7" cy="436.2" r="1.9"/><circle cx="480.9" cy="436.2" r="1.9"/><circle cx="494.4" cy="436.2" r="1.9"/><circle cx="508.4" cy="436.2" r="1.9"/><circle cx="523.5" cy="436.2" r="1.9"/><circle cx="530.3" cy="436.2" r="1.9"/><circle cx="560.5" cy="436.2" r="1.9"/><circle cx="564.6" cy="436.2" r="1.9"/><circle cx="568.3" cy="436.2" r="1.9"/><circle cx="593.2" cy="436.2" r="1.9"/><circle cx="598.4" cy="436.2" r="1.9"/><circle cx="602.6" cy="436.2" r="1.9"/><circle cx="605.7" cy="436.2" r="1.9"/><circle cx="644.7" cy="436.2" r="1.9"/><circle cx="655.2" cy="436.2" r="1.9"/><circle cx="668.2" cy="436.2" r="1.9"/><circle cx="676.0" cy="436.2" r="1.9"/><circle cx="699.9" cy="436.2" r="1.9"/><circle cx="731.1" cy="436.2" r="1.9"/><circle cx="736.8" cy="436.2" r="1.9"/><circle cx="782.1" cy="436.2" r="1.9"/><circle cx="824.8" cy="436.2" r="1.9"/><circle cx="827.4" cy="436.2" r="1.9"/><circle cx="835.2" cy="436.2" r="1.9"/><circle cx="840.4" cy="436.2" r="1.9"/><circle cx="877.3" cy="436.2" r="1.9"/><circle cx="888.8" cy="436.2" r="1.9"/><circle cx="910.1" cy="436.2" r="1.9"/><circle cx="937.2" cy="436.2" r="1.9"/><circle cx="943.9" cy="436.2" r="1.9"/><circle cx="963.2" cy="436.2" r="1.9"/><circle cx="1008.4" cy="436.2" r="1.9"/></g>
<g fill="#e2262d" fill-opacity="0.28"><circle cx="87.5" cy="436.2" r="6"/><circle cx="318.5" cy="436.2" r="6"/><circle cx="366.4" cy="436.2" r="6"/><circle cx="412.2" cy="436.2" r="6"/><circle cx="418.4" cy="436.2" r="6"/><circle cx="424.1" cy="436.2" r="6"/><circle cx="447.6" cy="436.2" r="6"/><circle cx="459.0" cy="436.2" r="6"/><circle cx="488.1" cy="436.2" r="6"/><circle cx="541.7" cy="436.2" r="6"/><circle cx="545.9" cy="436.2" r="6"/><circle cx="591.2" cy="436.2" r="6"/><circle cx="688.5" cy="436.2" r="6"/><circle cx="831.0" cy="436.2" r="6"/><circle cx="987.1" cy="436.2" r="6"/><circle cx="999.1" cy="436.2" r="6"/></g>
<g fill="#e2262d"><circle cx="87.5" cy="436.2" r="2.3"/><circle cx="318.5" cy="436.2" r="2.3"/><circle cx="366.4" cy="436.2" r="2.3"/><circle cx="412.2" cy="436.2" r="2.3"/><circle cx="418.4" cy="436.2" r="2.3"/><circle cx="424.1" cy="436.2" r="2.3"/><circle cx="447.6" cy="436.2" r="2.3"/><circle cx="459.0" cy="436.2" r="2.3"/><circle cx="488.1" cy="436.2" r="2.3"/><circle cx="541.7" cy="436.2" r="2.3"/><circle cx="545.9" cy="436.2" r="2.3"/><circle cx="591.2" cy="436.2" r="2.3"/><circle cx="688.5" cy="436.2" r="2.3"/><circle cx="831.0" cy="436.2" r="2.3"/><circle cx="987.1" cy="436.2" r="2.3"/><circle cx="999.1" cy="436.2" r="2.3"/></g>
<g class="legend"><rect x="211.3" y="567.8" width="15" height="3.5" rx="0.8" fill="#c540b6"/><circle cx="218.8" cy="569.55" r="1.8" fill="#fff" stroke="#c540b6" stroke-width="1.5"/><rect x="273.7" y="567.8" width="15" height="3.5" rx="0.8" fill="#3ba957"/><rect x="359" y="567.8" width="15" height="3.5" rx="0.8" fill="#16a59c"/><rect x="467" y="567.8" width="15" height="3.5" rx="0.8" fill="#4a4af2"/><rect x="564" y="567.8" width="15" height="3.5" rx="0.8" fill="#f5771f"/><circle cx="571.5" cy="569.55" r="1.8" fill="#fff" stroke="#f5771f" stroke-width="1.5"/><rect x="630" y="567.8" width="15" height="3.5" rx="0.8" fill="#e2262d"/><circle cx="637.5" cy="569.55" r="1.8" fill="#fff" stroke="#e2262d" stroke-width="1.5"/><rect x="714" y="567.8" width="15" height="3.5" rx="0.8" fill="#4489f8"/><rect x="794" y="567.8" width="15" height="3.5" rx="0.8" fill="#22cce2"/></g>
</svg>
<div class="sl"></div>
<div class="hn" style="left:61.3px"></div>
<div class="hn" style="left:1002.3px"></div>

</body></html>
